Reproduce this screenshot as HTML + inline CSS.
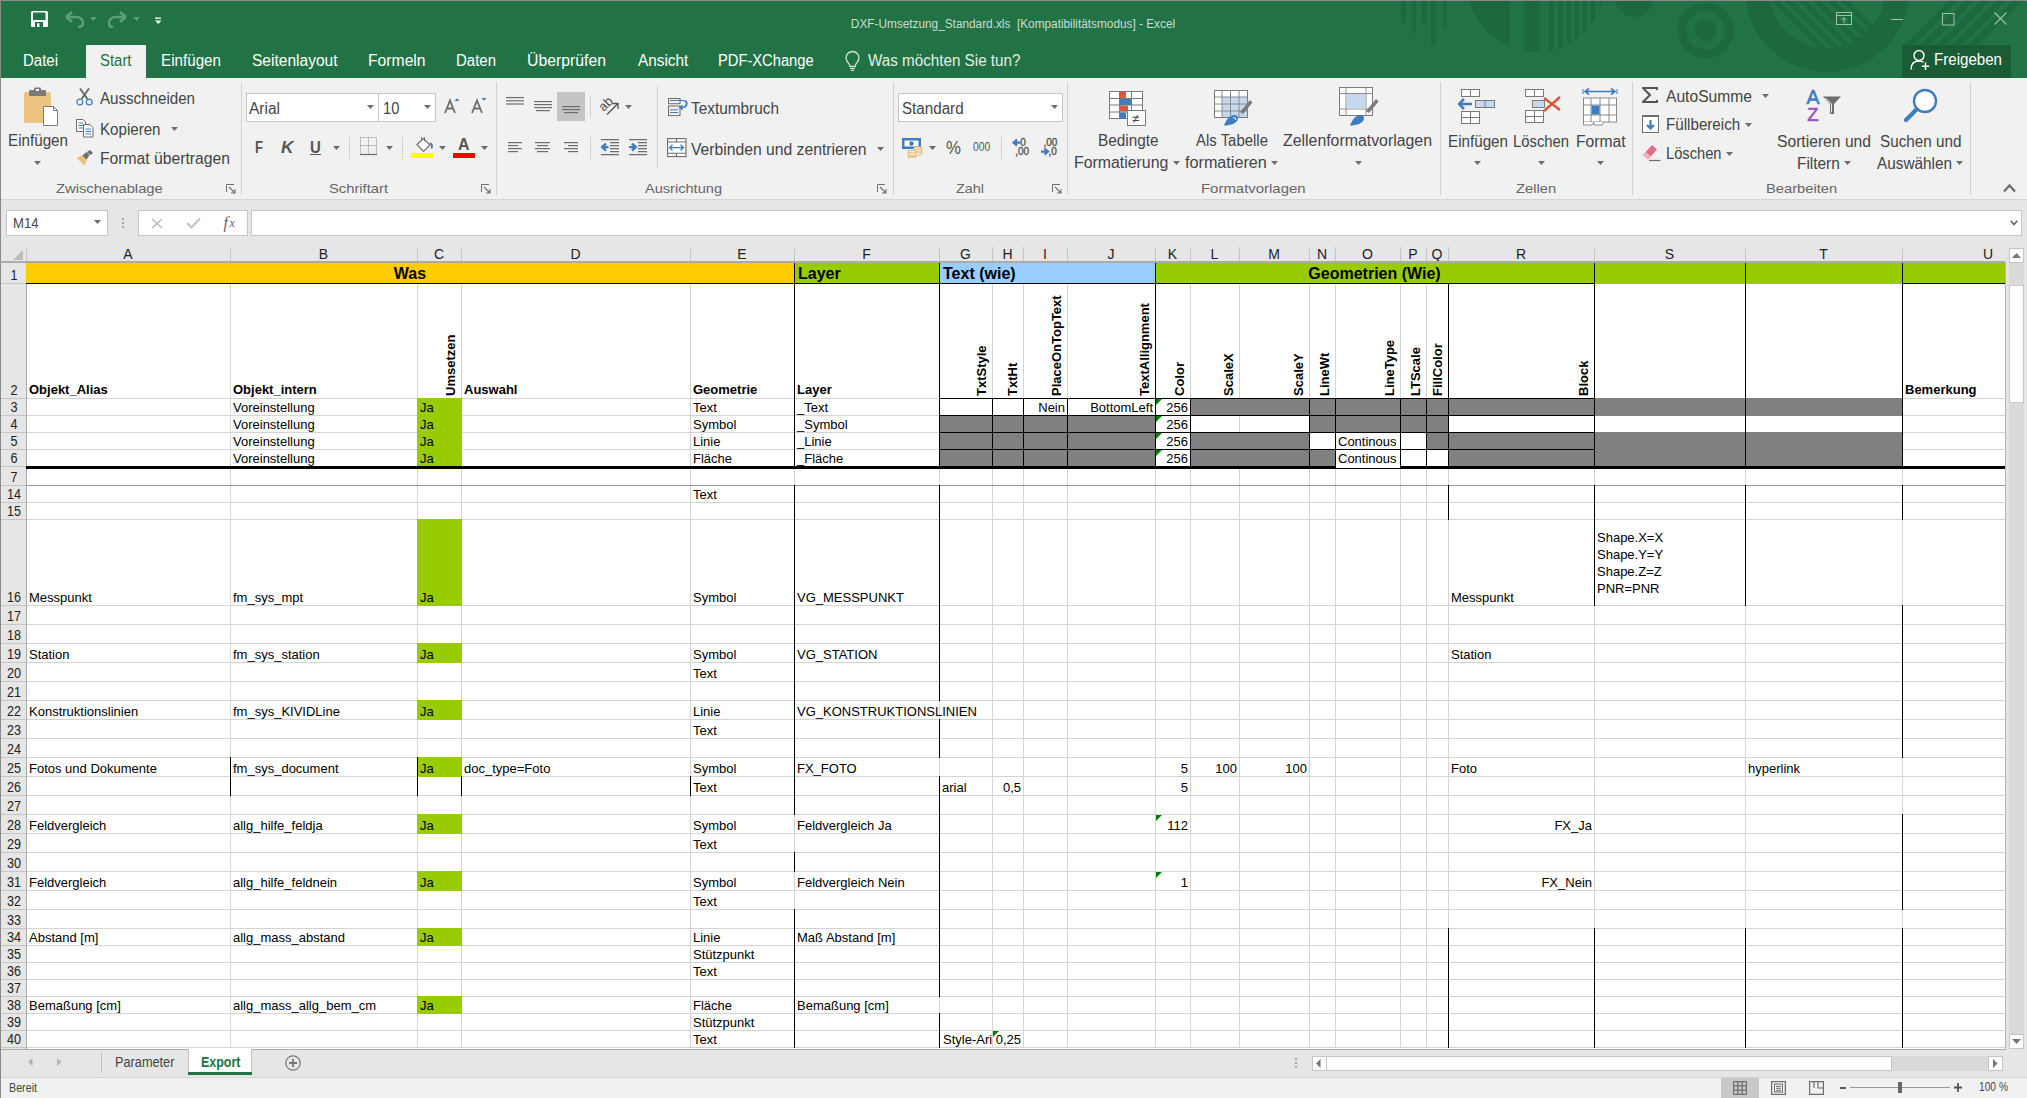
<!DOCTYPE html>
<html><head><meta charset="utf-8"><style>
html,body{margin:0;padding:0;width:2027px;height:1098px;overflow:hidden;background:#e6e6e6;font-family:"Liberation Sans",sans-serif}
div{position:absolute}
svg{position:absolute}
.t{white-space:nowrap;line-height:1}
</style></head><body>
<div style="left:0px;top:245px;width:2005px;height:804px;background:#ffffff;"></div>
<div style="left:0px;top:245px;width:2005px;height:17px;background:#e6e6e6;"></div>
<div style="left:0px;top:262px;width:26px;height:787px;background:#e6e6e6;"></div>
<div style="left:230px;top:262px;width:1px;height:785px;background:#d4d4d4;"></div>
<div style="left:417px;top:262px;width:1px;height:785px;background:#d4d4d4;"></div>
<div style="left:461px;top:262px;width:1px;height:785px;background:#d4d4d4;"></div>
<div style="left:690px;top:262px;width:1px;height:785px;background:#d4d4d4;"></div>
<div style="left:794px;top:262px;width:1px;height:785px;background:#d4d4d4;"></div>
<div style="left:939px;top:262px;width:1px;height:785px;background:#d4d4d4;"></div>
<div style="left:992px;top:262px;width:1px;height:785px;background:#d4d4d4;"></div>
<div style="left:1023px;top:262px;width:1px;height:785px;background:#d4d4d4;"></div>
<div style="left:1067px;top:262px;width:1px;height:785px;background:#d4d4d4;"></div>
<div style="left:1155px;top:262px;width:1px;height:785px;background:#d4d4d4;"></div>
<div style="left:1190px;top:262px;width:1px;height:785px;background:#d4d4d4;"></div>
<div style="left:1239px;top:262px;width:1px;height:785px;background:#d4d4d4;"></div>
<div style="left:1309px;top:262px;width:1px;height:785px;background:#d4d4d4;"></div>
<div style="left:1335px;top:262px;width:1px;height:785px;background:#d4d4d4;"></div>
<div style="left:1400px;top:262px;width:1px;height:785px;background:#d4d4d4;"></div>
<div style="left:1426px;top:262px;width:1px;height:785px;background:#d4d4d4;"></div>
<div style="left:1448px;top:262px;width:1px;height:785px;background:#d4d4d4;"></div>
<div style="left:1594px;top:262px;width:1px;height:785px;background:#d4d4d4;"></div>
<div style="left:1745px;top:262px;width:1px;height:785px;background:#d4d4d4;"></div>
<div style="left:1902px;top:262px;width:1px;height:785px;background:#d4d4d4;"></div>
<div style="left:26px;top:283px;width:1979px;height:1px;background:#d4d4d4;"></div>
<div style="left:26px;top:398px;width:1979px;height:1px;background:#d4d4d4;"></div>
<div style="left:26px;top:415px;width:1979px;height:1px;background:#d4d4d4;"></div>
<div style="left:26px;top:432px;width:1979px;height:1px;background:#d4d4d4;"></div>
<div style="left:26px;top:449px;width:1979px;height:1px;background:#d4d4d4;"></div>
<div style="left:26px;top:466px;width:1979px;height:1px;background:#d4d4d4;"></div>
<div style="left:26px;top:485px;width:1979px;height:1px;background:#d4d4d4;"></div>
<div style="left:26px;top:502px;width:1979px;height:1px;background:#d4d4d4;"></div>
<div style="left:26px;top:519px;width:1979px;height:1px;background:#d4d4d4;"></div>
<div style="left:26px;top:605px;width:1979px;height:1px;background:#d4d4d4;"></div>
<div style="left:26px;top:624px;width:1979px;height:1px;background:#d4d4d4;"></div>
<div style="left:26px;top:643px;width:1979px;height:1px;background:#d4d4d4;"></div>
<div style="left:26px;top:662px;width:1979px;height:1px;background:#d4d4d4;"></div>
<div style="left:26px;top:681px;width:1979px;height:1px;background:#d4d4d4;"></div>
<div style="left:26px;top:700px;width:1979px;height:1px;background:#d4d4d4;"></div>
<div style="left:26px;top:719px;width:1979px;height:1px;background:#d4d4d4;"></div>
<div style="left:26px;top:738px;width:1979px;height:1px;background:#d4d4d4;"></div>
<div style="left:26px;top:757px;width:1979px;height:1px;background:#d4d4d4;"></div>
<div style="left:26px;top:776px;width:1979px;height:1px;background:#d4d4d4;"></div>
<div style="left:26px;top:795px;width:1979px;height:1px;background:#d4d4d4;"></div>
<div style="left:26px;top:814px;width:1979px;height:1px;background:#d4d4d4;"></div>
<div style="left:26px;top:833px;width:1979px;height:1px;background:#d4d4d4;"></div>
<div style="left:26px;top:852px;width:1979px;height:1px;background:#d4d4d4;"></div>
<div style="left:26px;top:871px;width:1979px;height:1px;background:#d4d4d4;"></div>
<div style="left:26px;top:890px;width:1979px;height:1px;background:#d4d4d4;"></div>
<div style="left:26px;top:909px;width:1979px;height:1px;background:#d4d4d4;"></div>
<div style="left:26px;top:928px;width:1979px;height:1px;background:#d4d4d4;"></div>
<div style="left:26px;top:945px;width:1979px;height:1px;background:#d4d4d4;"></div>
<div style="left:26px;top:962px;width:1979px;height:1px;background:#d4d4d4;"></div>
<div style="left:26px;top:979px;width:1979px;height:1px;background:#d4d4d4;"></div>
<div style="left:26px;top:996px;width:1979px;height:1px;background:#d4d4d4;"></div>
<div style="left:26px;top:1013px;width:1979px;height:1px;background:#d4d4d4;"></div>
<div style="left:26px;top:1030px;width:1979px;height:1px;background:#d4d4d4;"></div>
<div style="left:26px;top:1047px;width:1979px;height:1px;background:#d4d4d4;"></div>
<div class="t" style="left:-172.0px;width:600px;text-align:center;top:247.25px;font-size:14px;color:#222;">A</div>
<div class="t" style="left:23.5px;width:600px;text-align:center;top:247.25px;font-size:14px;color:#222;">B</div>
<div class="t" style="left:139.0px;width:600px;text-align:center;top:247.25px;font-size:14px;color:#222;">C</div>
<div class="t" style="left:275.5px;width:600px;text-align:center;top:247.25px;font-size:14px;color:#222;">D</div>
<div class="t" style="left:442.0px;width:600px;text-align:center;top:247.25px;font-size:14px;color:#222;">E</div>
<div class="t" style="left:566.5px;width:600px;text-align:center;top:247.25px;font-size:14px;color:#222;">F</div>
<div class="t" style="left:665.5px;width:600px;text-align:center;top:247.25px;font-size:14px;color:#222;">G</div>
<div class="t" style="left:707.5px;width:600px;text-align:center;top:247.25px;font-size:14px;color:#222;">H</div>
<div class="t" style="left:745.0px;width:600px;text-align:center;top:247.25px;font-size:14px;color:#222;">I</div>
<div class="t" style="left:811.0px;width:600px;text-align:center;top:247.25px;font-size:14px;color:#222;">J</div>
<div class="t" style="left:872.5px;width:600px;text-align:center;top:247.25px;font-size:14px;color:#222;">K</div>
<div class="t" style="left:914.5px;width:600px;text-align:center;top:247.25px;font-size:14px;color:#222;">L</div>
<div class="t" style="left:974.0px;width:600px;text-align:center;top:247.25px;font-size:14px;color:#222;">M</div>
<div class="t" style="left:1022.0px;width:600px;text-align:center;top:247.25px;font-size:14px;color:#222;">N</div>
<div class="t" style="left:1067.5px;width:600px;text-align:center;top:247.25px;font-size:14px;color:#222;">O</div>
<div class="t" style="left:1113.0px;width:600px;text-align:center;top:247.25px;font-size:14px;color:#222;">P</div>
<div class="t" style="left:1137.0px;width:600px;text-align:center;top:247.25px;font-size:14px;color:#222;">Q</div>
<div class="t" style="left:1221.0px;width:600px;text-align:center;top:247.25px;font-size:14px;color:#222;">R</div>
<div class="t" style="left:1369.5px;width:600px;text-align:center;top:247.25px;font-size:14px;color:#222;">S</div>
<div class="t" style="left:1523.5px;width:600px;text-align:center;top:247.25px;font-size:14px;color:#222;">T</div>
<div class="t" style="left:1688px;width:600px;text-align:center;top:247.25px;font-size:14px;color:#222;">U</div>
<div style="left:230px;top:247px;width:1px;height:15px;background:#c6c6c6;"></div>
<div style="left:417px;top:247px;width:1px;height:15px;background:#c6c6c6;"></div>
<div style="left:461px;top:247px;width:1px;height:15px;background:#c6c6c6;"></div>
<div style="left:690px;top:247px;width:1px;height:15px;background:#c6c6c6;"></div>
<div style="left:794px;top:247px;width:1px;height:15px;background:#c6c6c6;"></div>
<div style="left:939px;top:247px;width:1px;height:15px;background:#c6c6c6;"></div>
<div style="left:992px;top:247px;width:1px;height:15px;background:#c6c6c6;"></div>
<div style="left:1023px;top:247px;width:1px;height:15px;background:#c6c6c6;"></div>
<div style="left:1067px;top:247px;width:1px;height:15px;background:#c6c6c6;"></div>
<div style="left:1155px;top:247px;width:1px;height:15px;background:#c6c6c6;"></div>
<div style="left:1190px;top:247px;width:1px;height:15px;background:#c6c6c6;"></div>
<div style="left:1239px;top:247px;width:1px;height:15px;background:#c6c6c6;"></div>
<div style="left:1309px;top:247px;width:1px;height:15px;background:#c6c6c6;"></div>
<div style="left:1335px;top:247px;width:1px;height:15px;background:#c6c6c6;"></div>
<div style="left:1400px;top:247px;width:1px;height:15px;background:#c6c6c6;"></div>
<div style="left:1426px;top:247px;width:1px;height:15px;background:#c6c6c6;"></div>
<div style="left:1448px;top:247px;width:1px;height:15px;background:#c6c6c6;"></div>
<div style="left:1594px;top:247px;width:1px;height:15px;background:#c6c6c6;"></div>
<div style="left:1745px;top:247px;width:1px;height:15px;background:#c6c6c6;"></div>
<div style="left:1902px;top:247px;width:1px;height:15px;background:#c6c6c6;"></div>
<div style="left:26px;top:247px;width:1px;height:15px;background:#c6c6c6;"></div>
<svg style="position:absolute;left:13px;top:250px" width="10" height="10"><path d="M10 0 L10 10 L0 10 Z" fill="#bdbdbd"/></svg>
<div style="left:0px;top:261px;width:2005px;height:1px;background:#ababab;"></div>
<div style="left:26px;top:262px;width:1px;height:787px;background:#ababab;"></div>
<div class="t" style="left:-286.5px;width:600px;text-align:center;top:268.25px;font-size:14px;color:#222;transform:scaleX(0.9);transform-origin:50% 0;">1</div>
<div style="left:0px;top:283px;width:26px;height:1px;background:#c6c6c6;"></div>
<div class="t" style="left:-286.5px;width:600px;text-align:center;top:383.25px;font-size:14px;color:#222;transform:scaleX(0.9);transform-origin:50% 0;">2</div>
<div style="left:0px;top:398px;width:26px;height:1px;background:#c6c6c6;"></div>
<div class="t" style="left:-286.5px;width:600px;text-align:center;top:400.25px;font-size:14px;color:#222;transform:scaleX(0.9);transform-origin:50% 0;">3</div>
<div style="left:0px;top:415px;width:26px;height:1px;background:#c6c6c6;"></div>
<div class="t" style="left:-286.5px;width:600px;text-align:center;top:417.25px;font-size:14px;color:#222;transform:scaleX(0.9);transform-origin:50% 0;">4</div>
<div style="left:0px;top:432px;width:26px;height:1px;background:#c6c6c6;"></div>
<div class="t" style="left:-286.5px;width:600px;text-align:center;top:434.25px;font-size:14px;color:#222;transform:scaleX(0.9);transform-origin:50% 0;">5</div>
<div style="left:0px;top:449px;width:26px;height:1px;background:#c6c6c6;"></div>
<div class="t" style="left:-286.5px;width:600px;text-align:center;top:451.25px;font-size:14px;color:#222;transform:scaleX(0.9);transform-origin:50% 0;">6</div>
<div style="left:0px;top:466px;width:26px;height:1px;background:#c6c6c6;"></div>
<div class="t" style="left:-286.5px;width:600px;text-align:center;top:470.25px;font-size:14px;color:#222;transform:scaleX(0.9);transform-origin:50% 0;">7</div>
<div style="left:0px;top:485px;width:26px;height:1px;background:#c6c6c6;"></div>
<div class="t" style="left:-286.5px;width:600px;text-align:center;top:487.25px;font-size:14px;color:#222;transform:scaleX(0.9);transform-origin:50% 0;">14</div>
<div style="left:0px;top:502px;width:26px;height:1px;background:#c6c6c6;"></div>
<div class="t" style="left:-286.5px;width:600px;text-align:center;top:504.25px;font-size:14px;color:#222;transform:scaleX(0.9);transform-origin:50% 0;">15</div>
<div style="left:0px;top:519px;width:26px;height:1px;background:#c6c6c6;"></div>
<div class="t" style="left:-286.5px;width:600px;text-align:center;top:590.25px;font-size:14px;color:#222;transform:scaleX(0.9);transform-origin:50% 0;">16</div>
<div style="left:0px;top:605px;width:26px;height:1px;background:#c6c6c6;"></div>
<div class="t" style="left:-286.5px;width:600px;text-align:center;top:609.25px;font-size:14px;color:#222;transform:scaleX(0.9);transform-origin:50% 0;">17</div>
<div style="left:0px;top:624px;width:26px;height:1px;background:#c6c6c6;"></div>
<div class="t" style="left:-286.5px;width:600px;text-align:center;top:628.25px;font-size:14px;color:#222;transform:scaleX(0.9);transform-origin:50% 0;">18</div>
<div style="left:0px;top:643px;width:26px;height:1px;background:#c6c6c6;"></div>
<div class="t" style="left:-286.5px;width:600px;text-align:center;top:647.25px;font-size:14px;color:#222;transform:scaleX(0.9);transform-origin:50% 0;">19</div>
<div style="left:0px;top:662px;width:26px;height:1px;background:#c6c6c6;"></div>
<div class="t" style="left:-286.5px;width:600px;text-align:center;top:666.25px;font-size:14px;color:#222;transform:scaleX(0.9);transform-origin:50% 0;">20</div>
<div style="left:0px;top:681px;width:26px;height:1px;background:#c6c6c6;"></div>
<div class="t" style="left:-286.5px;width:600px;text-align:center;top:685.25px;font-size:14px;color:#222;transform:scaleX(0.9);transform-origin:50% 0;">21</div>
<div style="left:0px;top:700px;width:26px;height:1px;background:#c6c6c6;"></div>
<div class="t" style="left:-286.5px;width:600px;text-align:center;top:704.25px;font-size:14px;color:#222;transform:scaleX(0.9);transform-origin:50% 0;">22</div>
<div style="left:0px;top:719px;width:26px;height:1px;background:#c6c6c6;"></div>
<div class="t" style="left:-286.5px;width:600px;text-align:center;top:723.25px;font-size:14px;color:#222;transform:scaleX(0.9);transform-origin:50% 0;">23</div>
<div style="left:0px;top:738px;width:26px;height:1px;background:#c6c6c6;"></div>
<div class="t" style="left:-286.5px;width:600px;text-align:center;top:742.25px;font-size:14px;color:#222;transform:scaleX(0.9);transform-origin:50% 0;">24</div>
<div style="left:0px;top:757px;width:26px;height:1px;background:#c6c6c6;"></div>
<div class="t" style="left:-286.5px;width:600px;text-align:center;top:761.25px;font-size:14px;color:#222;transform:scaleX(0.9);transform-origin:50% 0;">25</div>
<div style="left:0px;top:776px;width:26px;height:1px;background:#c6c6c6;"></div>
<div class="t" style="left:-286.5px;width:600px;text-align:center;top:780.25px;font-size:14px;color:#222;transform:scaleX(0.9);transform-origin:50% 0;">26</div>
<div style="left:0px;top:795px;width:26px;height:1px;background:#c6c6c6;"></div>
<div class="t" style="left:-286.5px;width:600px;text-align:center;top:799.25px;font-size:14px;color:#222;transform:scaleX(0.9);transform-origin:50% 0;">27</div>
<div style="left:0px;top:814px;width:26px;height:1px;background:#c6c6c6;"></div>
<div class="t" style="left:-286.5px;width:600px;text-align:center;top:818.25px;font-size:14px;color:#222;transform:scaleX(0.9);transform-origin:50% 0;">28</div>
<div style="left:0px;top:833px;width:26px;height:1px;background:#c6c6c6;"></div>
<div class="t" style="left:-286.5px;width:600px;text-align:center;top:837.25px;font-size:14px;color:#222;transform:scaleX(0.9);transform-origin:50% 0;">29</div>
<div style="left:0px;top:852px;width:26px;height:1px;background:#c6c6c6;"></div>
<div class="t" style="left:-286.5px;width:600px;text-align:center;top:856.25px;font-size:14px;color:#222;transform:scaleX(0.9);transform-origin:50% 0;">30</div>
<div style="left:0px;top:871px;width:26px;height:1px;background:#c6c6c6;"></div>
<div class="t" style="left:-286.5px;width:600px;text-align:center;top:875.25px;font-size:14px;color:#222;transform:scaleX(0.9);transform-origin:50% 0;">31</div>
<div style="left:0px;top:890px;width:26px;height:1px;background:#c6c6c6;"></div>
<div class="t" style="left:-286.5px;width:600px;text-align:center;top:894.25px;font-size:14px;color:#222;transform:scaleX(0.9);transform-origin:50% 0;">32</div>
<div style="left:0px;top:909px;width:26px;height:1px;background:#c6c6c6;"></div>
<div class="t" style="left:-286.5px;width:600px;text-align:center;top:913.25px;font-size:14px;color:#222;transform:scaleX(0.9);transform-origin:50% 0;">33</div>
<div style="left:0px;top:928px;width:26px;height:1px;background:#c6c6c6;"></div>
<div class="t" style="left:-286.5px;width:600px;text-align:center;top:930.25px;font-size:14px;color:#222;transform:scaleX(0.9);transform-origin:50% 0;">34</div>
<div style="left:0px;top:945px;width:26px;height:1px;background:#c6c6c6;"></div>
<div class="t" style="left:-286.5px;width:600px;text-align:center;top:947.25px;font-size:14px;color:#222;transform:scaleX(0.9);transform-origin:50% 0;">35</div>
<div style="left:0px;top:962px;width:26px;height:1px;background:#c6c6c6;"></div>
<div class="t" style="left:-286.5px;width:600px;text-align:center;top:964.25px;font-size:14px;color:#222;transform:scaleX(0.9);transform-origin:50% 0;">36</div>
<div style="left:0px;top:979px;width:26px;height:1px;background:#c6c6c6;"></div>
<div class="t" style="left:-286.5px;width:600px;text-align:center;top:981.25px;font-size:14px;color:#222;transform:scaleX(0.9);transform-origin:50% 0;">37</div>
<div style="left:0px;top:996px;width:26px;height:1px;background:#c6c6c6;"></div>
<div class="t" style="left:-286.5px;width:600px;text-align:center;top:998.25px;font-size:14px;color:#222;transform:scaleX(0.9);transform-origin:50% 0;">38</div>
<div style="left:0px;top:1013px;width:26px;height:1px;background:#c6c6c6;"></div>
<div class="t" style="left:-286.5px;width:600px;text-align:center;top:1015.25px;font-size:14px;color:#222;transform:scaleX(0.9);transform-origin:50% 0;">39</div>
<div style="left:0px;top:1030px;width:26px;height:1px;background:#c6c6c6;"></div>
<div class="t" style="left:-286.5px;width:600px;text-align:center;top:1032.25px;font-size:14px;color:#222;transform:scaleX(0.9);transform-origin:50% 0;">40</div>
<div style="left:0px;top:1047px;width:26px;height:1px;background:#c6c6c6;"></div>
<div style="left:26px;top:262px;width:769px;height:22px;background:#ffcc00;"></div>
<div style="left:794px;top:262px;width:146px;height:22px;background:#99cc00;"></div>
<div style="left:939px;top:262px;width:217px;height:22px;background:#99ccff;"></div>
<div style="left:1155px;top:262px;width:851px;height:22px;background:#99cc00;"></div>
<div style="left:417px;top:398px;width:45px;height:18px;background:#99cc00;"></div>
<div style="left:417px;top:415px;width:45px;height:18px;background:#99cc00;"></div>
<div style="left:417px;top:432px;width:45px;height:18px;background:#99cc00;"></div>
<div style="left:417px;top:449px;width:45px;height:18px;background:#99cc00;"></div>
<div style="left:417px;top:519px;width:45px;height:87px;background:#99cc00;"></div>
<div style="left:417px;top:643px;width:45px;height:20px;background:#99cc00;"></div>
<div style="left:417px;top:700px;width:45px;height:20px;background:#99cc00;"></div>
<div style="left:417px;top:757px;width:45px;height:20px;background:#99cc00;"></div>
<div style="left:417px;top:814px;width:45px;height:20px;background:#99cc00;"></div>
<div style="left:417px;top:871px;width:45px;height:20px;background:#99cc00;"></div>
<div style="left:417px;top:928px;width:45px;height:18px;background:#99cc00;"></div>
<div style="left:417px;top:996px;width:45px;height:18px;background:#99cc00;"></div>
<div style="left:1190px;top:398px;width:50px;height:18px;background:#808080;"></div>
<div style="left:1239px;top:398px;width:71px;height:18px;background:#808080;"></div>
<div style="left:1309px;top:398px;width:27px;height:18px;background:#808080;"></div>
<div style="left:1335px;top:398px;width:66px;height:18px;background:#808080;"></div>
<div style="left:1400px;top:398px;width:27px;height:18px;background:#808080;"></div>
<div style="left:1426px;top:398px;width:23px;height:18px;background:#808080;"></div>
<div style="left:1448px;top:398px;width:147px;height:18px;background:#808080;"></div>
<div style="left:1594px;top:398px;width:152px;height:18px;background:#808080;"></div>
<div style="left:1745px;top:398px;width:158px;height:18px;background:#808080;"></div>
<div style="left:939px;top:415px;width:54px;height:18px;background:#808080;"></div>
<div style="left:992px;top:415px;width:32px;height:18px;background:#808080;"></div>
<div style="left:1023px;top:415px;width:45px;height:18px;background:#808080;"></div>
<div style="left:1067px;top:415px;width:89px;height:18px;background:#808080;"></div>
<div style="left:1309px;top:415px;width:27px;height:18px;background:#808080;"></div>
<div style="left:1335px;top:415px;width:66px;height:18px;background:#808080;"></div>
<div style="left:1400px;top:415px;width:27px;height:18px;background:#808080;"></div>
<div style="left:1426px;top:415px;width:23px;height:18px;background:#808080;"></div>
<div style="left:939px;top:432px;width:54px;height:18px;background:#808080;"></div>
<div style="left:992px;top:432px;width:32px;height:18px;background:#808080;"></div>
<div style="left:1023px;top:432px;width:45px;height:18px;background:#808080;"></div>
<div style="left:1067px;top:432px;width:89px;height:18px;background:#808080;"></div>
<div style="left:1190px;top:432px;width:50px;height:18px;background:#808080;"></div>
<div style="left:1239px;top:432px;width:71px;height:18px;background:#808080;"></div>
<div style="left:1426px;top:432px;width:23px;height:18px;background:#808080;"></div>
<div style="left:1448px;top:432px;width:147px;height:18px;background:#808080;"></div>
<div style="left:1594px;top:432px;width:152px;height:18px;background:#808080;"></div>
<div style="left:1745px;top:432px;width:158px;height:18px;background:#808080;"></div>
<div style="left:939px;top:449px;width:54px;height:18px;background:#808080;"></div>
<div style="left:992px;top:449px;width:32px;height:18px;background:#808080;"></div>
<div style="left:1023px;top:449px;width:45px;height:18px;background:#808080;"></div>
<div style="left:1067px;top:449px;width:89px;height:18px;background:#808080;"></div>
<div style="left:1190px;top:449px;width:50px;height:18px;background:#808080;"></div>
<div style="left:1239px;top:449px;width:71px;height:18px;background:#808080;"></div>
<div style="left:1309px;top:449px;width:27px;height:18px;background:#808080;"></div>
<div style="left:1448px;top:449px;width:147px;height:18px;background:#808080;"></div>
<div style="left:1594px;top:449px;width:152px;height:18px;background:#808080;"></div>
<div style="left:1745px;top:449px;width:158px;height:18px;background:#808080;"></div>
<div style="left:940px;top:399px;width:52px;height:16px;background:#fff;"></div>
<div style="left:993px;top:399px;width:30px;height:16px;background:#fff;"></div>
<div style="left:1024px;top:399px;width:43px;height:16px;background:#fff;"></div>
<div style="left:1068px;top:399px;width:87px;height:16px;background:#fff;"></div>
<div style="left:1156px;top:399px;width:34px;height:16px;background:#fff;"></div>
<div style="left:1156px;top:416px;width:34px;height:16px;background:#fff;"></div>
<div style="left:1191px;top:416px;width:48px;height:16px;background:#fff;"></div>
<div style="left:1240px;top:416px;width:69px;height:16px;background:#fff;"></div>
<div style="left:1449px;top:416px;width:145px;height:16px;background:#fff;"></div>
<div style="left:1595px;top:416px;width:150px;height:16px;background:#fff;"></div>
<div style="left:1746px;top:416px;width:156px;height:16px;background:#fff;"></div>
<div style="left:1156px;top:433px;width:34px;height:16px;background:#fff;"></div>
<div style="left:1310px;top:433px;width:25px;height:16px;background:#fff;"></div>
<div style="left:1336px;top:433px;width:64px;height:16px;background:#fff;"></div>
<div style="left:1401px;top:433px;width:25px;height:16px;background:#fff;"></div>
<div style="left:1156px;top:450px;width:34px;height:16px;background:#fff;"></div>
<div style="left:1336px;top:450px;width:64px;height:16px;background:#fff;"></div>
<div style="left:1401px;top:450px;width:25px;height:16px;background:#fff;"></div>
<div style="left:1427px;top:450px;width:21px;height:16px;background:#fff;"></div>
<div style="left:1594px;top:449px;width:308px;height:1px;background:#808080;"></div>
<div style="left:26px;top:283px;width:1569px;height:1px;background:#000;"></div>
<div style="left:1902px;top:283px;width:104px;height:1px;background:#000;"></div>
<div style="left:794px;top:262px;width:1px;height:205px;background:#000;"></div>
<div style="left:939px;top:262px;width:1px;height:205px;background:#000;"></div>
<div style="left:1155px;top:262px;width:1px;height:205px;background:#000;"></div>
<div style="left:1594px;top:262px;width:1px;height:205px;background:#000;"></div>
<div style="left:1745px;top:262px;width:1px;height:205px;background:#000;"></div>
<div style="left:1902px;top:262px;width:1px;height:205px;background:#000;"></div>
<div style="left:1448px;top:283px;width:1px;height:184px;background:#000;"></div>
<div style="left:939px;top:398px;width:656px;height:1px;background:#000;"></div>
<div style="left:939px;top:415px;width:656px;height:1px;background:#000;"></div>
<div style="left:939px;top:432px;width:656px;height:1px;background:#000;"></div>
<div style="left:939px;top:449px;width:656px;height:1px;background:#000;"></div>
<div style="left:992px;top:398px;width:1px;height:69px;background:#000;"></div>
<div style="left:1023px;top:398px;width:1px;height:69px;background:#000;"></div>
<div style="left:1067px;top:398px;width:1px;height:69px;background:#000;"></div>
<div style="left:1190px;top:398px;width:1px;height:69px;background:#000;"></div>
<div style="left:1309px;top:398px;width:1px;height:69px;background:#000;"></div>
<div style="left:1335px;top:398px;width:1px;height:69px;background:#000;"></div>
<div style="left:1400px;top:398px;width:1px;height:69px;background:#000;"></div>
<div style="left:1426px;top:398px;width:1px;height:69px;background:#000;"></div>
<div style="left:26px;top:466px;width:1979px;height:3px;background:#000;"></div>
<div style="left:26px;top:485px;width:1979px;height:1px;background:#9a9a9a;"></div>
<div style="left:794px;top:485px;width:1px;height:330px;background:#000;"></div>
<div style="left:794px;top:852px;width:1px;height:20px;background:#000;"></div>
<div style="left:794px;top:909px;width:1px;height:139px;background:#000;"></div>
<div style="left:939px;top:485px;width:1px;height:216px;background:#000;"></div>
<div style="left:939px;top:719px;width:1px;height:39px;background:#000;"></div>
<div style="left:939px;top:776px;width:1px;height:221px;background:#000;"></div>
<div style="left:939px;top:1013px;width:1px;height:35px;background:#000;"></div>
<div style="left:230px;top:757px;width:1px;height:39px;background:#000;"></div>
<div style="left:417px;top:757px;width:1px;height:39px;background:#000;"></div>
<div style="left:461px;top:776px;width:1px;height:20px;background:#000;"></div>
<div style="left:690px;top:776px;width:1px;height:20px;background:#000;"></div>
<div style="left:1448px;top:485px;width:1px;height:35px;background:#000;"></div>
<div style="left:1448px;top:928px;width:1px;height:120px;background:#000;"></div>
<div style="left:1594px;top:485px;width:1px;height:121px;background:#000;"></div>
<div style="left:1594px;top:928px;width:1px;height:120px;background:#000;"></div>
<div style="left:1745px;top:485px;width:1px;height:121px;background:#000;"></div>
<div style="left:1745px;top:928px;width:1px;height:120px;background:#000;"></div>
<div style="left:1902px;top:485px;width:1px;height:35px;background:#000;"></div>
<div style="left:1902px;top:605px;width:1px;height:153px;background:#000;"></div>
<div style="left:1902px;top:814px;width:1px;height:96px;background:#000;"></div>
<div style="left:1902px;top:928px;width:1px;height:120px;background:#000;"></div>
<svg style="position:absolute;left:1156px;top:399px" width="6" height="6"><path d="M0 0 L6 0 L0 6 Z" fill="#008000"/></svg>
<svg style="position:absolute;left:1156px;top:416px" width="6" height="6"><path d="M0 0 L6 0 L0 6 Z" fill="#008000"/></svg>
<svg style="position:absolute;left:1156px;top:433px" width="6" height="6"><path d="M0 0 L6 0 L0 6 Z" fill="#008000"/></svg>
<svg style="position:absolute;left:1156px;top:450px" width="6" height="6"><path d="M0 0 L6 0 L0 6 Z" fill="#008000"/></svg>
<svg style="position:absolute;left:1156px;top:815px" width="6" height="6"><path d="M0 0 L6 0 L0 6 Z" fill="#008000"/></svg>
<svg style="position:absolute;left:1156px;top:872px" width="6" height="6"><path d="M0 0 L6 0 L0 6 Z" fill="#008000"/></svg>
<svg style="position:absolute;left:993px;top:1031px" width="6" height="6"><path d="M0 0 L6 0 L0 6 Z" fill="#008000"/></svg>
<div class="t" style="left:110px;width:600px;text-align:center;top:265.86px;font-size:16px;color:#000;font-weight:bold;">Was</div>
<div class="t" style="left:798px;top:265.86px;font-size:16px;color:#000;font-weight:bold;">Layer</div>
<div class="t" style="left:943px;top:265.86px;font-size:16px;color:#000;font-weight:bold;">Text (wie)</div>
<div class="t" style="left:1074.5px;width:600px;text-align:center;top:265.86px;font-size:16px;color:#000;font-weight:bold;">Geometrien (Wie)</div>
<div class="t" style="left:29px;top:383.10px;font-size:13px;color:#000;font-weight:bold;">Objekt_Alias</div>
<div class="t" style="left:233px;top:383.10px;font-size:13px;color:#000;font-weight:bold;">Objekt_intern</div>
<div class="t" style="left:464px;top:383.10px;font-size:13px;color:#000;font-weight:bold;">Auswahl</div>
<div class="t" style="left:693px;top:383.10px;font-size:13px;color:#000;font-weight:bold;">Geometrie</div>
<div class="t" style="left:797px;top:383.10px;font-size:13px;color:#000;font-weight:bold;">Layer</div>
<div class="t" style="left:1905px;top:383.10px;font-size:13px;color:#000;font-weight:bold;">Bemerkung</div>
<div class="t" style="left:455px;top:396px;font-size:13px;color:#000;font-weight:bold;transform-origin:0 0;transform:rotate(-90deg) translate(0,-11.00px)">Umsetzen</div>
<div class="t" style="left:986px;top:396px;font-size:13px;color:#000;font-weight:bold;transform-origin:0 0;transform:rotate(-90deg) translate(0,-11.00px)">TxtStyle</div>
<div class="t" style="left:1017px;top:396px;font-size:13px;color:#000;font-weight:bold;transform-origin:0 0;transform:rotate(-90deg) translate(0,-11.00px)">TxtHt</div>
<div class="t" style="left:1061px;top:396px;font-size:13px;color:#000;font-weight:bold;transform-origin:0 0;transform:rotate(-90deg) translate(0,-11.00px)">PlaceOnTopText</div>
<div class="t" style="left:1149px;top:396px;font-size:13px;color:#000;font-weight:bold;transform-origin:0 0;transform:rotate(-90deg) translate(0,-11.00px)">TextAllignment</div>
<div class="t" style="left:1184px;top:396px;font-size:13px;color:#000;font-weight:bold;transform-origin:0 0;transform:rotate(-90deg) translate(0,-11.00px)">Color</div>
<div class="t" style="left:1233px;top:396px;font-size:13px;color:#000;font-weight:bold;transform-origin:0 0;transform:rotate(-90deg) translate(0,-11.00px)">ScaleX</div>
<div class="t" style="left:1303px;top:396px;font-size:13px;color:#000;font-weight:bold;transform-origin:0 0;transform:rotate(-90deg) translate(0,-11.00px)">ScaleY</div>
<div class="t" style="left:1329px;top:396px;font-size:13px;color:#000;font-weight:bold;transform-origin:0 0;transform:rotate(-90deg) translate(0,-11.00px)">LineWt</div>
<div class="t" style="left:1394px;top:396px;font-size:13px;color:#000;font-weight:bold;transform-origin:0 0;transform:rotate(-90deg) translate(0,-11.00px)">LineType</div>
<div class="t" style="left:1420px;top:396px;font-size:13px;color:#000;font-weight:bold;transform-origin:0 0;transform:rotate(-90deg) translate(0,-11.00px)">LTScale</div>
<div class="t" style="left:1442px;top:396px;font-size:13px;color:#000;font-weight:bold;transform-origin:0 0;transform:rotate(-90deg) translate(0,-11.00px)">FillColor</div>
<div class="t" style="left:1588px;top:396px;font-size:13px;color:#000;font-weight:bold;transform-origin:0 0;transform:rotate(-90deg) translate(0,-11.00px)">Block</div>
<div class="t" style="left:233px;top:401.10px;font-size:13px;color:#000;">Voreinstellung</div>
<div class="t" style="left:420px;top:401.10px;font-size:13px;color:#000;">Ja</div>
<div class="t" style="left:693px;top:401.10px;font-size:13px;color:#000;">Text</div>
<div class="t" style="left:797px;top:401.10px;font-size:13px;color:#000;">_Text</div>
<div class="t" style="right:839px;top:401.10px;font-size:13px;color:#000;">256</div>
<div class="t" style="left:233px;top:418.10px;font-size:13px;color:#000;">Voreinstellung</div>
<div class="t" style="left:420px;top:418.10px;font-size:13px;color:#000;">Ja</div>
<div class="t" style="left:693px;top:418.10px;font-size:13px;color:#000;">Symbol</div>
<div class="t" style="left:797px;top:418.10px;font-size:13px;color:#000;">_Symbol</div>
<div class="t" style="right:839px;top:418.10px;font-size:13px;color:#000;">256</div>
<div class="t" style="left:233px;top:435.10px;font-size:13px;color:#000;">Voreinstellung</div>
<div class="t" style="left:420px;top:435.10px;font-size:13px;color:#000;">Ja</div>
<div class="t" style="left:693px;top:435.10px;font-size:13px;color:#000;">Linie</div>
<div class="t" style="left:797px;top:435.10px;font-size:13px;color:#000;">_Linie</div>
<div class="t" style="right:839px;top:435.10px;font-size:13px;color:#000;">256</div>
<div class="t" style="left:233px;top:452.10px;font-size:13px;color:#000;">Voreinstellung</div>
<div class="t" style="left:420px;top:452.10px;font-size:13px;color:#000;">Ja</div>
<div class="t" style="left:693px;top:452.10px;font-size:13px;color:#000;">Fläche</div>
<div class="t" style="left:797px;top:452.10px;font-size:13px;color:#000;">_Fläche</div>
<div class="t" style="right:839px;top:452.10px;font-size:13px;color:#000;">256</div>
<div class="t" style="right:962px;top:401.10px;font-size:13px;color:#000;">Nein</div>
<div class="t" style="right:874px;top:401.10px;font-size:13px;color:#000;">BottomLeft</div>
<div class="t" style="left:1338px;top:435.10px;font-size:13px;color:#000;">Continous</div>
<div class="t" style="left:1338px;top:452.10px;font-size:13px;color:#000;">Continous</div>
<div class="t" style="left:693px;top:488.10px;font-size:13px;color:#000;">Text</div>
<div class="t" style="left:29px;top:591.10px;font-size:13px;color:#000;">Messpunkt</div>
<div class="t" style="left:233px;top:591.10px;font-size:13px;color:#000;">fm_sys_mpt</div>
<div class="t" style="left:420px;top:591.10px;font-size:13px;color:#000;">Ja</div>
<div class="t" style="left:693px;top:591.10px;font-size:13px;color:#000;">Symbol</div>
<div class="t" style="left:797px;top:591.10px;font-size:13px;color:#000;">VG_MESSPUNKT</div>
<div class="t" style="left:1451px;top:591.10px;font-size:13px;color:#000;">Messpunkt</div>
<div class="t" style="left:29px;top:648.10px;font-size:13px;color:#000;">Station</div>
<div class="t" style="left:233px;top:648.10px;font-size:13px;color:#000;">fm_sys_station</div>
<div class="t" style="left:420px;top:648.10px;font-size:13px;color:#000;">Ja</div>
<div class="t" style="left:693px;top:648.10px;font-size:13px;color:#000;">Symbol</div>
<div class="t" style="left:797px;top:648.10px;font-size:13px;color:#000;">VG_STATION</div>
<div class="t" style="left:1451px;top:648.10px;font-size:13px;color:#000;">Station</div>
<div class="t" style="left:29px;top:705.10px;font-size:13px;color:#000;">Konstruktionslinien</div>
<div class="t" style="left:233px;top:705.10px;font-size:13px;color:#000;">fm_sys_KIVIDLine</div>
<div class="t" style="left:420px;top:705.10px;font-size:13px;color:#000;">Ja</div>
<div class="t" style="left:693px;top:705.10px;font-size:13px;color:#000;">Linie</div>
<div class="t" style="left:797px;top:705.10px;font-size:13px;color:#000;">VG_KONSTRUKTIONSLINIEN</div>
<div class="t" style="left:29px;top:762.10px;font-size:13px;color:#000;">Fotos und Dokumente</div>
<div class="t" style="left:233px;top:762.10px;font-size:13px;color:#000;">fm_sys_document</div>
<div class="t" style="left:420px;top:762.10px;font-size:13px;color:#000;">Ja</div>
<div class="t" style="left:693px;top:762.10px;font-size:13px;color:#000;">Symbol</div>
<div class="t" style="left:797px;top:762.10px;font-size:13px;color:#000;">FX_FOTO</div>
<div class="t" style="left:1451px;top:762.10px;font-size:13px;color:#000;">Foto</div>
<div class="t" style="left:29px;top:819.10px;font-size:13px;color:#000;">Feldvergleich</div>
<div class="t" style="left:233px;top:819.10px;font-size:13px;color:#000;">allg_hilfe_feldja</div>
<div class="t" style="left:420px;top:819.10px;font-size:13px;color:#000;">Ja</div>
<div class="t" style="left:693px;top:819.10px;font-size:13px;color:#000;">Symbol</div>
<div class="t" style="left:797px;top:819.10px;font-size:13px;color:#000;">Feldvergleich Ja</div>
<div class="t" style="left:29px;top:876.10px;font-size:13px;color:#000;">Feldvergleich</div>
<div class="t" style="left:233px;top:876.10px;font-size:13px;color:#000;">allg_hilfe_feldnein</div>
<div class="t" style="left:420px;top:876.10px;font-size:13px;color:#000;">Ja</div>
<div class="t" style="left:693px;top:876.10px;font-size:13px;color:#000;">Symbol</div>
<div class="t" style="left:797px;top:876.10px;font-size:13px;color:#000;">Feldvergleich Nein</div>
<div class="t" style="left:29px;top:931.10px;font-size:13px;color:#000;">Abstand [m]</div>
<div class="t" style="left:233px;top:931.10px;font-size:13px;color:#000;">allg_mass_abstand</div>
<div class="t" style="left:420px;top:931.10px;font-size:13px;color:#000;">Ja</div>
<div class="t" style="left:693px;top:931.10px;font-size:13px;color:#000;">Linie</div>
<div class="t" style="left:797px;top:931.10px;font-size:13px;color:#000;">Maß Abstand [m]</div>
<div class="t" style="left:29px;top:999.10px;font-size:13px;color:#000;">Bemaßung [cm]</div>
<div class="t" style="left:233px;top:999.10px;font-size:13px;color:#000;">allg_mass_allg_bem_cm</div>
<div class="t" style="left:420px;top:999.10px;font-size:13px;color:#000;">Ja</div>
<div class="t" style="left:693px;top:999.10px;font-size:13px;color:#000;">Fläche</div>
<div class="t" style="left:797px;top:999.10px;font-size:13px;color:#000;">Bemaßung [cm]</div>
<div class="t" style="left:693px;top:667.10px;font-size:13px;color:#000;">Text</div>
<div class="t" style="left:693px;top:724.10px;font-size:13px;color:#000;">Text</div>
<div class="t" style="left:693px;top:781.10px;font-size:13px;color:#000;">Text</div>
<div class="t" style="left:693px;top:838.10px;font-size:13px;color:#000;">Text</div>
<div class="t" style="left:693px;top:895.10px;font-size:13px;color:#000;">Text</div>
<div class="t" style="left:693px;top:965.10px;font-size:13px;color:#000;">Text</div>
<div class="t" style="left:693px;top:1033.10px;font-size:13px;color:#000;">Text</div>
<div class="t" style="left:693px;top:948.10px;font-size:13px;color:#000;">Stützpunkt</div>
<div class="t" style="left:693px;top:1016.10px;font-size:13px;color:#000;">Stützpunkt</div>
<div class="t" style="left:464px;top:762.10px;font-size:13px;color:#000;">doc_type=Foto</div>
<div class="t" style="right:839px;top:762.10px;font-size:13px;color:#000;">5</div>
<div class="t" style="right:790px;top:762.10px;font-size:13px;color:#000;">100</div>
<div class="t" style="right:720px;top:762.10px;font-size:13px;color:#000;">100</div>
<div class="t" style="left:1748px;top:762.10px;font-size:13px;color:#000;">hyperlink</div>
<div class="t" style="left:942px;top:781.10px;font-size:13px;color:#000;">arial</div>
<div class="t" style="right:1006px;top:781.10px;font-size:13px;color:#000;">0,5</div>
<div class="t" style="right:839px;top:781.10px;font-size:13px;color:#000;">5</div>
<div class="t" style="right:839px;top:819.10px;font-size:13px;color:#000;">112</div>
<div class="t" style="right:435px;top:819.10px;font-size:13px;color:#000;">FX_Ja</div>
<div class="t" style="right:839px;top:876.10px;font-size:13px;color:#000;">1</div>
<div class="t" style="right:435px;top:876.10px;font-size:13px;color:#000;">FX_Nein</div>
<div class="t" style="right:1006px;top:1033.10px;font-size:13px;color:#000;">0,25</div>
<div style="left:940px;top:1031px;width:52px;height:16px;overflow:hidden">
<div class="t" style="left:3px;top:2.10px;font-size:13px;color:#000;">Style-Arial</div>
</div>
<div class="t" style="left:1597px;top:531.10px;font-size:13px;color:#000;">Shape.X=X</div>
<div class="t" style="left:1597px;top:548.10px;font-size:13px;color:#000;">Shape.Y=Y</div>
<div class="t" style="left:1597px;top:565.10px;font-size:13px;color:#000;">Shape.Z=Z</div>
<div class="t" style="left:1597px;top:582.10px;font-size:13px;color:#000;">PNR=PNR</div>
<div style="left:0px;top:0px;width:2027px;height:78px;background:#217346;"></div>
<svg style="left:0;top:0" width="2027" height="78"><rect x="1401" y="0" width="5" height="23" fill="#1e6840"/><rect x="1412" y="0" width="4" height="33" fill="#1e6840"/><rect x="1422" y="0" width="5" height="23" fill="#1e6840"/><rect x="1431" y="0" width="5" height="45" fill="#1e6840"/><rect x="1443" y="0" width="4" height="29" fill="#1e6840"/><clipPath id="semi"><circle cx="1536" cy="-17" r="69"/></clipPath><g clip-path="url(#semi)"><path d="M1467 -20 L1467 60 L1510 60 L1510 -20 Z" fill="#1e6840"/><rect x="1524" y="-20" width="16" height="80" fill="#1e6840"/><rect x="1549" y="-20" width="5" height="80" fill="#1e6840"/><rect x="1558" y="-20" width="5" height="80" fill="#1e6840"/><rect x="1567" y="-20" width="4" height="80" fill="#1e6840"/><rect x="1575" y="-20" width="4" height="80" fill="#1e6840"/><rect x="1583" y="-20" width="4" height="80" fill="#1e6840"/><rect x="1591" y="-20" width="4" height="80" fill="#1e6840"/><rect x="1600" y="-20" width="5" height="80" fill="#1e6840"/></g><circle cx="1634" cy="-2" r="19" fill="#1e6840"/><circle cx="1705.5" cy="30.3" r="23.5" fill="none" stroke="#1e6840" stroke-width="8.8"/><circle cx="1705.5" cy="30.3" r="11" fill="#1e6840"/><circle cx="1827" cy="-10" r="70" fill="none" stroke="#1e6840" stroke-width="24"/><clipPath id="big"><circle cx="1827" cy="-10" r="58"/></clipPath><g clip-path="url(#big)"><path d="M1760 -10 L1768 -10 L1848 70 L1840 70 Z" fill="#1e6840"/><path d="M1774 -10 L1782 -10 L1862 70 L1854 70 Z" fill="#1e6840"/><path d="M1788 -10 L1796 -10 L1876 70 L1868 70 Z" fill="#1e6840"/><path d="M1802 -10 L1810 -10 L1890 70 L1882 70 Z" fill="#1e6840"/><path d="M1816 -10 L1824 -10 L1904 70 L1896 70 Z" fill="#1e6840"/><path d="M1830 -10 L1838 -10 L1918 70 L1910 70 Z" fill="#1e6840"/></g><path d="M1950 0 L1959 0 L1914 45 L1905 45 Z" fill="#1e6840"/><path d="M1966 0 L1975 0 L1930 45 L1921 45 Z" fill="#1e6840"/><path d="M1982 0 L1991 0 L1946 45 L1937 45 Z" fill="#1e6840"/><path d="M1998 0 L2007 0 L1962 45 L1953 45 Z" fill="#1e6840"/><path d="M2014 0 L2023 0 L1978 45 L1969 45 Z" fill="#1e6840"/></svg>
<div style="left:0px;top:0px;width:2027px;height:1px;background:#8a8a8a;"></div>
<div style="left:0px;top:0px;width:1px;height:1098px;background:#8a8a8a;"></div>
<svg style="left:31px;top:11px" width="17" height="16" viewBox="0 0 17 16"><rect x="0" y="0" width="17" height="16" rx="1.5" fill="#fff"/><rect x="2" y="1.5" width="12.5" height="7.5" fill="#217346"/><rect x="4" y="11" width="8" height="5" fill="#217346"/><rect x="6" y="12.3" width="2.5" height="3.7" fill="#fff"/></svg>
<svg style="left:64px;top:11px" width="21" height="17" viewBox="0 0 21 17"><path d="M2 6 L8 1 M2 6 L8 11 M2 6 L12 6 C17 6 19 9 19 12 C19 14.5 17 16 14 16" fill="none" stroke="#5f9c78" stroke-width="2.6"/></svg>
<svg style="left:90px;top:17px" width="7" height="4" viewBox="0 0 7 4"><path d="M0 0 L7 0 L3.5 4 Z" fill="#5f9c78"/></svg>
<svg style="left:107px;top:11px" width="21" height="17" viewBox="0 0 21 17"><path d="M19 6 L13 1 M19 6 L13 11 M19 6 L9 6 C4 6 2 9 2 12 C2 14.5 3.5 16 6 16.5" fill="none" stroke="#5f9c78" stroke-width="2.6"/></svg>
<svg style="left:133px;top:17px" width="7" height="4" viewBox="0 0 7 4"><path d="M0 0 L7 0 L3.5 4 Z" fill="#5f9c78"/></svg>
<svg style="left:155px;top:17px" width="7" height="8" viewBox="0 0 7 8"><rect x="0" y="0.5" width="6" height="1.3" fill="#fff"/><path d="M0 3.5 L6.5 3.5 L3.25 7 Z" fill="#fff"/></svg>
<div class="t" style="left:713px;width:600px;text-align:center;top:17.94px;font-size:12px;color:#c9ddd0;transform-origin:50% 0;transform:scaleX(0.9842);white-space:pre;">DXF-Umsetzung_Standard.xls  [Kompatibilitätsmodus] - Excel</div>
<svg style="left:1836px;top:12px" width="17" height="14" viewBox="0 0 17 14"><rect x="0.5" y="0.5" width="15" height="12" fill="none" stroke="#9dc3aa"/><path d="M1 3.5 L15 3.5 M8 11 L8 6 M5.5 8 L8 5.5 L10.5 8" fill="none" stroke="#9dc3aa"/></svg>
<div style="left:1891px;top:19px;width:12px;height:1px;background:#9dc3aa;"></div>
<svg style="left:1942px;top:13px" width="13" height="13" viewBox="0 0 13 13"><rect x="0.5" y="0.5" width="11.5" height="11.5" fill="none" stroke="#9dc3aa"/></svg>
<svg style="left:1994px;top:12px" width="14" height="14" viewBox="0 0 14 14"><path d="M0.5 0.5 L12.5 12.5 M12.5 0.5 L0.5 12.5" stroke="#9dc3aa" stroke-width="1.2"/></svg>
<div style="left:86px;top:45px;width:60px;height:33px;background:#f1f1f1;"></div>
<div class="t" style="left:23.3px;top:52.86px;font-size:16px;color:#ffffff;transform-origin:0 0;transform:scaleX(0.9368);">Datei</div>
<div class="t" style="left:99.5px;top:52.86px;font-size:16px;color:#217346;transform-origin:0 0;transform:scaleX(0.9320);">Start</div>
<div class="t" style="left:161.4px;top:52.86px;font-size:16px;color:#ffffff;transform-origin:0 0;transform:scaleX(0.9498);">Einfügen</div>
<div class="t" style="left:252.4px;top:52.86px;font-size:16px;color:#ffffff;transform-origin:0 0;transform:scaleX(0.9709);">Seitenlayout</div>
<div class="t" style="left:368px;top:52.86px;font-size:16px;color:#ffffff;transform-origin:0 0;transform:scaleX(0.9815);">Formeln</div>
<div class="t" style="left:456.3px;top:52.86px;font-size:16px;color:#ffffff;transform-origin:0 0;transform:scaleX(0.9367);">Daten</div>
<div class="t" style="left:527.3px;top:52.86px;font-size:16px;color:#ffffff;transform-origin:0 0;transform:scaleX(0.9869);">Überprüfen</div>
<div class="t" style="left:637.5px;top:52.86px;font-size:16px;color:#ffffff;transform-origin:0 0;transform:scaleX(0.9587);">Ansicht</div>
<div class="t" style="left:718.3px;top:52.86px;font-size:16px;color:#ffffff;transform-origin:0 0;transform:scaleX(0.9188);">PDF-XChange</div>
<svg style="left:844px;top:50px" width="18" height="22" viewBox="0 0 18 22"><path d="M8.5 1.5 C4.5 1.5 2 4.5 2 8 C2 10.5 3.5 12 4.8 13.6 C5.5 14.5 5.8 15.3 5.8 16.3 L11.2 16.3 C11.2 15.3 11.5 14.5 12.2 13.6 C13.5 12 15 10.5 15 8 C15 4.5 12.5 1.5 8.5 1.5 Z M6 18.3 L11 18.3 M6.8 20.3 L10.2 20.3" fill="none" stroke="#d5e5da" stroke-width="1.3"/></svg>
<div class="t" style="left:867.8px;top:52.86px;font-size:16px;color:#e3eee7;transform-origin:0 0;transform:scaleX(0.9503);">Was möchten Sie tun?</div>
<div style="left:1902px;top:45px;width:109px;height:33px;background:#1a5c36;"></div>
<svg style="left:1910px;top:49px" width="20" height="22" viewBox="0 0 20 22"><circle cx="9" cy="6.5" r="5" fill="none" stroke="#fff" stroke-width="1.4"/><path d="M1 20.5 C1 15 4 12 9 12 C11 12 12.5 12.5 13.5 13.3" fill="none" stroke="#fff" stroke-width="1.4"/><path d="M15.5 13.5 L15.5 21 M11.8 17.3 L19.2 17.3" stroke="#fff" stroke-width="1.4"/></svg>
<div class="t" style="left:1934.2px;top:51.86px;font-size:16px;color:#ffffff;transform-origin:0 0;transform:scaleX(0.9438);">Freigeben</div>
<div style="left:0px;top:78px;width:2027px;height:121px;background:#f1f1f1;"></div>
<div style="left:1px;top:199px;width:2027px;height:1px;background:#d4d4d4;"></div>
<div style="left:241px;top:82px;width:1px;height:113px;background:#d2d2d2;"></div>
<div style="left:496px;top:82px;width:1px;height:113px;background:#d2d2d2;"></div>
<div style="left:893px;top:82px;width:1px;height:113px;background:#d2d2d2;"></div>
<div style="left:1067px;top:82px;width:1px;height:113px;background:#d2d2d2;"></div>
<div style="left:1440px;top:82px;width:1px;height:113px;background:#d2d2d2;"></div>
<div style="left:1632px;top:82px;width:1px;height:113px;background:#d2d2d2;"></div>
<div style="left:1970px;top:82px;width:1px;height:113px;background:#d2d2d2;"></div>
<div class="t" style="left:56px;top:182.10px;font-size:13px;color:#666666;transform-origin:0 0;transform:scaleX(1.1367);">Zwischenablage</div>
<div class="t" style="left:328.5px;top:182.10px;font-size:13px;color:#666666;transform-origin:0 0;transform:scaleX(1.1343);">Schriftart</div>
<div class="t" style="left:645.3px;top:182.10px;font-size:13px;color:#666666;transform-origin:0 0;transform:scaleX(1.1215);">Ausrichtung</div>
<div class="t" style="left:955.5px;top:182.10px;font-size:13px;color:#666666;transform-origin:0 0;transform:scaleX(1.1069);">Zahl</div>
<div class="t" style="left:1201.4px;top:182.10px;font-size:13px;color:#666666;transform-origin:0 0;transform:scaleX(1.1489);">Formatvorlagen</div>
<div class="t" style="left:1516.3px;top:182.10px;font-size:13px;color:#666666;transform-origin:0 0;transform:scaleX(1.1349);">Zellen</div>
<div class="t" style="left:1765.5px;top:182.10px;font-size:13px;color:#666666;transform-origin:0 0;transform:scaleX(1.1321);">Bearbeiten</div>
<svg style="left:226px;top:184px" width="10" height="10" viewBox="0 0 10 10"><path d="M0.5 8 L0.5 0.5 L8 0.5" fill="none" stroke="#6d6d6d"/><path d="M3 3 L8.5 8.5 M9 5 L9 9 L5 9" fill="none" stroke="#6d6d6d" stroke-width="1.1"/></svg>
<svg style="left:481px;top:184px" width="10" height="10" viewBox="0 0 10 10"><path d="M0.5 8 L0.5 0.5 L8 0.5" fill="none" stroke="#6d6d6d"/><path d="M3 3 L8.5 8.5 M9 5 L9 9 L5 9" fill="none" stroke="#6d6d6d" stroke-width="1.1"/></svg>
<svg style="left:877px;top:184px" width="10" height="10" viewBox="0 0 10 10"><path d="M0.5 8 L0.5 0.5 L8 0.5" fill="none" stroke="#6d6d6d"/><path d="M3 3 L8.5 8.5 M9 5 L9 9 L5 9" fill="none" stroke="#6d6d6d" stroke-width="1.1"/></svg>
<svg style="left:1052px;top:184px" width="10" height="10" viewBox="0 0 10 10"><path d="M0.5 8 L0.5 0.5 L8 0.5" fill="none" stroke="#6d6d6d"/><path d="M3 3 L8.5 8.5 M9 5 L9 9 L5 9" fill="none" stroke="#6d6d6d" stroke-width="1.1"/></svg>
<svg style="left:2003px;top:183px" width="14" height="10" viewBox="0 0 14 10"><path d="M1 8.5 L6.5 2.5 L12 8.5" fill="none" stroke="#6d6d6d" stroke-width="2.2"/></svg>
<svg style="left:23px;top:87px" width="36" height="40" viewBox="0 0 36 40"><rect x="1" y="5" width="27" height="31" rx="2" fill="#eac17a" opacity="0.95"/><rect x="6" y="3" width="17" height="6" rx="1" fill="#7a7a7a"/><rect x="11" y="0.5" width="7" height="4" rx="1" fill="#7a7a7a"/><rect x="13" y="2" width="3" height="2" fill="#f1f1f1"/><path d="M20.5 19.5 L30.5 19.5 L34.5 23.5 L34.5 38.5 L20.5 38.5 Z" fill="#fff" stroke="#7a7a7a"/><path d="M30.5 19.5 L30.5 23.5 L34.5 23.5" fill="none" stroke="#7a7a7a"/></svg>
<div class="t" style="left:7.6px;top:132.86px;font-size:16px;color:#444444;transform-origin:0 0;transform:scaleX(0.9498);">Einfügen</div>
<svg style="left:34px;top:161px" width="7" height="4" viewBox="0 0 7 4"><path d="M0 0 L7 0 L3.5 4 Z" fill="#6d6d6d"/></svg>
<svg style="left:76px;top:88px" width="17" height="18" viewBox="0 0 17 18"><path d="M4 0.5 L11.5 11 M13 0.5 L5.5 11" stroke="#6d6d6d" stroke-width="2"/><circle cx="3.8" cy="14" r="2.9" fill="none" stroke="#3f7dc1" stroke-width="1.2"/><circle cx="13.2" cy="14" r="2.9" fill="none" stroke="#3f7dc1" stroke-width="1.2"/></svg>
<div class="t" style="left:99.7px;top:90.86px;font-size:16px;color:#444444;transform-origin:0 0;transform:scaleX(0.9451);">Ausschneiden</div>
<svg style="left:76px;top:119px" width="18" height="19" viewBox="0 0 18 19"><path d="M0.5 0.5 L7 0.5 L9.5 3 L9.5 12.5 L0.5 12.5 Z" fill="#fff" stroke="#6d6d6d"/><path d="M2.5 4 L7 4 M2.5 6.5 L7.5 6.5 M2.5 9 L7.5 9" stroke="#3f7dc1"/><path d="M7.5 5.5 L14 5.5 L17 8.5 L17 18 L7.5 18 Z" fill="#fff" stroke="#6d6d6d"/><path d="M9.5 10 L15 10 M9.5 12.5 L15 12.5 M9.5 15 L15 15" stroke="#3f7dc1"/></svg>
<div class="t" style="left:99.7px;top:121.86px;font-size:16px;color:#444444;transform-origin:0 0;transform:scaleX(0.9446);">Kopieren</div>
<svg style="left:171px;top:127px" width="7" height="4" viewBox="0 0 7 4"><path d="M0 0 L7 0 L3.5 4 Z" fill="#6d6d6d"/></svg>
<svg style="left:76px;top:150px" width="18" height="16" viewBox="0 0 18 16"><path d="M0.5 8 L7 5 L11 9.5 L8.5 15.5 Z" fill="#eac17a"/><path d="M6.5 5.5 L10.5 2 L13.5 5 L10.5 9.5 Z" fill="#6d6d6d"/><path d="M11 2 L14 0 L17 3 L14.5 5" fill="#6d6d6d"/></svg>
<div class="t" style="left:99.7px;top:150.86px;font-size:16px;color:#444444;transform-origin:0 0;transform:scaleX(0.9810);">Format übertragen</div>
<div style="left:246px;top:93px;width:133px;height:29px;background:#fff;box-sizing:border-box;border:1px solid #c6c6c6"></div>
<div style="left:378px;top:93px;width:58px;height:29px;background:#fff;box-sizing:border-box;border:1px solid #c6c6c6"></div>
<div class="t" style="left:249.2px;top:100.86px;font-size:16px;color:#444444;transform-origin:0 0;transform:scaleX(0.9683);">Arial</div>
<svg style="left:367px;top:105px" width="7" height="4" viewBox="0 0 7 4"><path d="M0 0 L7 0 L3.5 4 Z" fill="#6d6d6d"/></svg>
<div class="t" style="left:383.4px;top:100.86px;font-size:16px;color:#444444;transform-origin:0 0;transform:scaleX(0.9159);">10</div>
<svg style="left:424px;top:105px" width="7" height="4" viewBox="0 0 7 4"><path d="M0 0 L7 0 L3.5 4 Z" fill="#6d6d6d"/></svg>
<svg style="left:444px;top:97px" width="16" height="17" viewBox="0 0 16 17"><path d="M1 16 L6 3.5 L11 16 M3 11.5 L9 11.5" fill="none" stroke="#6d6d6d" stroke-width="1.8"/><path d="M10.5 4 L13 1.2 L15.5 4 Z" fill="#3f7dc1"/></svg>
<svg style="left:471px;top:97px" width="16" height="17" viewBox="0 0 16 17"><path d="M1 16 L6 3.5 L11 16 M3 11.5 L9 11.5" fill="none" stroke="#6d6d6d" stroke-width="1.8"/><path d="M10.5 1 L15.5 1 L13 3.8 Z" fill="#3f7dc1"/></svg>
<div class="t" style="left:255px;top:139.86px;font-size:16px;color:#555;font-weight:bold;transform-origin:0 0;transform:scaleX(0.8179);">F</div>
<div class="t" style="left:281px;top:139.86px;font-size:16px;color:#555;font-weight:bold;transform-origin:0 0;transform:scaleX(1.0811);font-style:italic;">K</div>
<div class="t" style="left:310px;top:139.86px;font-size:16px;color:#555;font-weight:bold;transform-origin:0 0;transform:scaleX(0.9341);">U</div>
<div style="left:310px;top:154px;width:11px;height:1.3px;background:#555;"></div>
<svg style="left:333px;top:146px" width="7" height="4" viewBox="0 0 7 4"><path d="M0 0 L7 0 L3.5 4 Z" fill="#6d6d6d"/></svg>
<div style="left:349px;top:137px;width:1px;height:22px;background:#d2d2d2;"></div>
<svg style="left:360px;top:137px" width="18" height="19" viewBox="0 0 18 19"><path d="M0.5 0.5 L16.5 0.5 L16.5 17 M0.5 0.5 L0.5 17 M8.5 0.5 L8.5 17 M0.5 8.5 L16.5 8.5" fill="none" stroke="#8a8a8a" stroke-dasharray="1 1"/><path d="M0 17.5 L17 17.5" stroke="#6d6d6d" stroke-width="1.2"/></svg>
<svg style="left:386px;top:146px" width="7" height="4" viewBox="0 0 7 4"><path d="M0 0 L7 0 L3.5 4 Z" fill="#6d6d6d"/></svg>
<div style="left:402px;top:137px;width:1px;height:22px;background:#d2d2d2;"></div>
<svg style="left:413px;top:137px" width="20" height="16" viewBox="0 0 20 16"><path d="M4 7.5 L10.5 1.5 L17 8 L10.5 14.5 Z" fill="#fff" stroke="#6d6d6d" stroke-width="1.2"/><path d="M8.5 3 L8.5 0.8 A1.5 1.5 0 0 1 11.5 0.8 L11.5 4" fill="none" stroke="#6d6d6d"/><path d="M17 6 C19 7 19.5 9 18.5 11.5" fill="none" stroke="#3f7dc1" stroke-width="1.8"/></svg>
<div style="left:411px;top:153px;width:22px;height:5px;background:#ffff00;"></div>
<svg style="left:439px;top:146px" width="7" height="4" viewBox="0 0 7 4"><path d="M0 0 L7 0 L3.5 4 Z" fill="#6d6d6d"/></svg>
<div class="t" style="left:458px;top:135.71px;font-size:17px;color:#555;font-weight:bold;transform-origin:0 0;transform:scaleX(0.9364);">A</div>
<div style="left:453px;top:153px;width:22px;height:5px;background:#ff0000;"></div>
<svg style="left:481px;top:146px" width="7" height="4" viewBox="0 0 7 4"><path d="M0 0 L7 0 L3.5 4 Z" fill="#6d6d6d"/></svg>
<svg style="left:506px;top:97px" width="20" height="11.600000000000001" viewBox="0 0 20 11.600000000000001"><rect x="0" y="0.0" width="18" height="1.2" fill="#6d6d6d"/><rect x="0" y="3.2" width="18" height="1.2" fill="#6d6d6d"/><rect x="0" y="6.4" width="18" height="1.2" fill="#6d6d6d"/></svg>
<svg style="left:534px;top:101px" width="20" height="14" viewBox="0 0 20 14"><rect x="0" y="0" width="18" height="1.2" fill="#6d6d6d"/><rect x="0" y="3" width="18" height="1.2" fill="#6d6d6d"/><rect x="0" y="6" width="18" height="1.2" fill="#6d6d6d"/><rect x="2" y="9" width="14" height="1.2" fill="#6d6d6d"/></svg>
<div style="left:557px;top:92px;width:28px;height:29px;background:#c5c5c5;"></div>
<svg style="left:562px;top:106px" width="20" height="11" viewBox="0 0 20 11"><rect x="0" y="0" width="18" height="1.2" fill="#6d6d6d"/><rect x="0" y="3" width="18" height="1.2" fill="#6d6d6d"/><rect x="2" y="6" width="14" height="1.2" fill="#6d6d6d"/></svg>
<div style="left:590px;top:96px;width:1px;height:22px;background:#d2d2d2;"></div>
<svg style="left:599px;top:96px" width="22" height="20" viewBox="0 0 22 20"><text x="0" y="13" font-size="13" font-family="Liberation Sans" fill="#555" transform="rotate(-45 6 9)">ab</text><path d="M8 18.5 L18.5 8 M13.5 7.5 L19 7.5 L19 13" fill="none" stroke="#555" stroke-width="1.3"/></svg>
<svg style="left:625px;top:105px" width="7" height="4" viewBox="0 0 7 4"><path d="M0 0 L7 0 L3.5 4 Z" fill="#6d6d6d"/></svg>
<svg style="left:667px;top:97px" width="22" height="20" viewBox="0 0 22 20"><rect x="1.5" y="1.5" width="11.5" height="5.2" fill="none" stroke="#6d6d6d"/><rect x="1.5" y="9" width="11.5" height="9.6" fill="none" stroke="#6d6d6d"/><path d="M3 3.5 L17.5 3.5 M3 12.8 L11 12.8 M3 15.5 L11 15.5" stroke="#3f7dc1" stroke-width="1"/><path d="M17.5 3.5 C21 5 20.5 10.5 14.5 10.5" fill="none" stroke="#3f7dc1" stroke-width="1.8"/><path d="M11.5 10.5 L15.5 7.5 L15.5 13.5 Z" fill="#3f7dc1"/></svg>
<div style="left:657px;top:86px;width:1px;height:83px;background:#d2d2d2;"></div>
<div class="t" style="left:691.2px;top:100.86px;font-size:16px;color:#444444;transform-origin:0 0;transform:scaleX(0.9608);">Textumbruch</div>
<svg style="left:508px;top:142px" width="20" height="14" viewBox="0 0 20 14"><rect x="0" y="0" width="14" height="1.2" fill="#6d6d6d"/><rect x="0" y="3" width="10" height="1.2" fill="#6d6d6d"/><rect x="0" y="6" width="14" height="1.2" fill="#6d6d6d"/><rect x="0" y="9" width="10" height="1.2" fill="#6d6d6d"/></svg>
<svg style="left:535px;top:142px" width="20" height="14" viewBox="0 0 20 14"><rect x="0" y="0" width="15" height="1.2" fill="#6d6d6d"/><rect x="2" y="3" width="11" height="1.2" fill="#6d6d6d"/><rect x="0" y="6" width="15" height="1.2" fill="#6d6d6d"/><rect x="2" y="9" width="11" height="1.2" fill="#6d6d6d"/></svg>
<svg style="left:564px;top:142px" width="20" height="14" viewBox="0 0 20 14"><rect x="0" y="0" width="14" height="1.2" fill="#6d6d6d"/><rect x="4" y="3" width="10" height="1.2" fill="#6d6d6d"/><rect x="0" y="6" width="14" height="1.2" fill="#6d6d6d"/><rect x="4" y="9" width="10" height="1.2" fill="#6d6d6d"/></svg>
<div style="left:590px;top:137px;width:1px;height:22px;background:#d2d2d2;"></div>
<svg style="left:601px;top:139px" width="19" height="17" viewBox="0 0 19 17"><path d="M0 0.6 L18 0.6 M9 3.6 L18 3.6 M9 6.6 L18 6.6 M9 9.6 L18 9.6 M9 12.6 L18 12.6 M0 15.6 L18 15.6" stroke="#6d6d6d" stroke-width="1.1"/><path d="M7.5 8.1 L2 8.1 M5 4.6 L1.2 8.1 L5 11.6" fill="none" stroke="#3f7dc1" stroke-width="2.4"/></svg>
<svg style="left:629px;top:139px" width="19" height="17" viewBox="0 0 19 17"><path d="M0 0.6 L18 0.6 M9 3.6 L18 3.6 M9 6.6 L18 6.6 M9 9.6 L18 9.6 M9 12.6 L18 12.6 M0 15.6 L18 15.6" stroke="#6d6d6d" stroke-width="1.1"/><path d="M0 8.1 L6 8.1 M3 4.6 L6.8 8.1 L3 11.6" fill="none" stroke="#3f7dc1" stroke-width="2.4"/></svg>
<svg style="left:667px;top:138px" width="20" height="20" viewBox="0 0 20 20"><rect x="0.6" y="0.6" width="18.4" height="18" fill="#fff" stroke="#6d6d6d" stroke-width="1.1"/><path d="M0.5 4 L19 4 M0.5 15.2 L19 15.2 M9.5 0.5 L9.5 4 M9.5 15.2 L9.5 19" stroke="#6d6d6d" stroke-width="1.1"/><path d="M2.5 9.6 L16.5 9.6 M5.5 6.8 L2.5 9.6 L5.5 12.4 M13.5 6.8 L16.5 9.6 L13.5 12.4" fill="none" stroke="#3f7dc1" stroke-width="1.3"/></svg>
<div class="t" style="left:691.2px;top:141.86px;font-size:16px;color:#444444;transform-origin:0 0;transform:scaleX(0.9810);">Verbinden und zentrieren</div>
<svg style="left:877px;top:147px" width="7" height="4" viewBox="0 0 7 4"><path d="M0 0 L7 0 L3.5 4 Z" fill="#6d6d6d"/></svg>
<div style="left:898px;top:93px;width:165px;height:29px;background:#fff;box-sizing:border-box;border:1px solid #c6c6c6"></div>
<div class="t" style="left:901.7px;top:100.86px;font-size:16px;color:#444444;transform-origin:0 0;transform:scaleX(0.9486);">Standard</div>
<svg style="left:1051px;top:105px" width="7" height="4" viewBox="0 0 7 4"><path d="M0 0 L7 0 L3.5 4 Z" fill="#6d6d6d"/></svg>
<svg style="left:901px;top:137px" width="22" height="21" viewBox="0 0 22 21"><rect x="1" y="1" width="19" height="11" fill="#3f7dc1"/><rect x="3.5" y="3.5" width="14" height="6" fill="#fff"/><circle cx="10.5" cy="6.5" r="2.2" fill="#3f7dc1"/><g fill="#f1f1f1" stroke="#e8bf7a" stroke-width="1.2"><ellipse cx="17" cy="11.5" rx="4" ry="1.6"/><ellipse cx="17" cy="14" rx="4" ry="1.6"/><ellipse cx="17" cy="16.5" rx="4" ry="1.6"/><ellipse cx="11" cy="15" rx="4" ry="1.6"/><ellipse cx="11" cy="17.5" rx="4" ry="1.6"/><ellipse cx="11" cy="20" rx="4" ry="0.9"/></g></svg>
<svg style="left:929px;top:146px" width="7" height="4" viewBox="0 0 7 4"><path d="M0 0 L7 0 L3.5 4 Z" fill="#6d6d6d"/></svg>
<div class="t" style="left:946px;top:138.02px;font-size:19px;color:#555;transform-origin:0 0;transform:scaleX(0.8872);">%</div>
<div class="t" style="left:972.8px;top:140.94px;font-size:12px;color:#555;transform-origin:0 0;transform:scaleX(0.8587);">000</div>
<div style="left:1001px;top:137px;width:1px;height:22px;background:#d2d2d2;"></div>
<svg style="left:1012px;top:137px" width="18" height="20" viewBox="0 0 18 20"><text x="8.3" y="8.6" font-size="10" font-family="Liberation Sans" fill="#555" stroke="#555" stroke-width="0.35">0</text><text x="3.2" y="18.3" font-size="10" font-family="Liberation Sans" fill="#555" stroke="#555" stroke-width="0.35">,00</text><path d="M8.5 5.6 L2.5 5.6 M5 2.6 L1.5 5.6 L5 8.6" fill="none" stroke="#3f7dc1" stroke-width="2.2"/></svg>
<svg style="left:1040px;top:137px" width="18" height="20" viewBox="0 0 18 20"><text x="3.5" y="8.6" font-size="10" font-family="Liberation Sans" fill="#555" stroke="#555" stroke-width="0.35">,00</text><text x="8.6" y="18.3" font-size="10" font-family="Liberation Sans" fill="#555" stroke="#555" stroke-width="0.35">,0</text><path d="M1 14.6 L7 14.6 M4.5 11.6 L8 14.6 L4.5 17.6" fill="none" stroke="#3f7dc1" stroke-width="2.2"/></svg>
<svg style="left:1109px;top:91px" width="39" height="36" viewBox="0 0 39 36"><rect x="0.5" y="0.5" width="33" height="27" fill="#fff" stroke="#7a7a7a"/><path d="M0.5 7.5 L33.5 7.5 M0.5 14 L33.5 14 M0.5 21 L33.5 21 M10.5 0.5 L10.5 27.5 M22.5 0.5 L22.5 27.5" stroke="#7a7a7a"/><rect x="11" y="1" width="6" height="6" fill="#d9573a"/><rect x="11" y="8" width="11" height="6" fill="#3f7dc1"/><rect x="11" y="14.5" width="8" height="6" fill="#d9573a"/><rect x="11" y="21.5" width="6" height="6" fill="#3f7dc1"/><rect x="18.5" y="19.5" width="18" height="15" fill="#fff" stroke="#7a7a7a"/><text x="23" y="31.5" font-size="13" font-family="Liberation Sans" fill="#444">≠</text></svg>
<div class="t" style="left:1097.5px;top:132.86px;font-size:16px;color:#444444;transform-origin:0 0;transform:scaleX(0.9593);">Bedingte</div>
<div class="t" style="left:1074.4px;top:154.86px;font-size:16px;color:#444444;transform-origin:0 0;transform:scaleX(0.9910);">Formatierung</div>
<svg style="left:1173px;top:161px" width="7" height="4" viewBox="0 0 7 4"><path d="M0 0 L7 0 L3.5 4 Z" fill="#6d6d6d"/></svg>
<svg style="left:1214px;top:90px" width="40" height="37" viewBox="0 0 40 37"><rect x="0.5" y="0.5" width="33" height="27" fill="#fff" stroke="#7a7a7a"/><rect x="8" y="7" width="25" height="20" fill="#c5d8ee"/><path d="M0.5 7 L33.5 7 M0.5 14 L33.5 14 M0.5 21 L33.5 21 M8 0.5 L8 27.5 M16.5 0.5 L16.5 27.5 M25 0.5 L25 27.5" stroke="#8a8a8a"/><path d="M26 22 L36 10 L38.5 12.5 L29 24 Z" fill="#7a7a7a"/><path d="M10 35.5 C12 30 15 26 20 25 C24 25 25 28 23 31 C21 34 15 35.5 10 35.5 Z" fill="#3f7dc1"/><path d="M19 28 C21 27 22 28 21.5 30" stroke="#fff" stroke-width="1" fill="none"/></svg>
<div class="t" style="left:1196.2px;top:132.86px;font-size:16px;color:#444444;transform-origin:0 0;transform:scaleX(0.9339);">Als Tabelle</div>
<div class="t" style="left:1185px;top:154.86px;font-size:16px;color:#444444;transform-origin:0 0;transform:scaleX(1.0109);">formatieren</div>
<svg style="left:1271px;top:161px" width="7" height="4" viewBox="0 0 7 4"><path d="M0 0 L7 0 L3.5 4 Z" fill="#6d6d6d"/></svg>
<svg style="left:1339px;top:87px" width="41" height="40" viewBox="0 0 41 40"><rect x="0.5" y="0.5" width="33" height="28" fill="#fff" stroke="#7a7a7a"/><path d="M0.5 6.5 L33.5 6.5 M0.5 22 L33.5 22 M7 0.5 L7 28.5 M27 0.5 L27 28.5" stroke="#8a8a8a"/><rect x="7.5" y="7" width="19" height="14.5" fill="#c5d8ee"/><path d="M27 24 L37 12 L39.5 14.5 L30 26 Z" fill="#7a7a7a"/><path d="M11 38.5 C13 33 16 29 21 28 C25 28 26 31 24 34 C22 37 16 38.5 11 38.5 Z" fill="#3f7dc1"/></svg>
<div class="t" style="left:1283.2px;top:132.86px;font-size:16px;color:#444444;transform-origin:0 0;transform:scaleX(0.9914);">Zellenformatvorlagen</div>
<svg style="left:1355px;top:161px" width="7" height="4" viewBox="0 0 7 4"><path d="M0 0 L7 0 L3.5 4 Z" fill="#6d6d6d"/></svg>
<svg style="left:1458px;top:89px" width="38" height="36" viewBox="0 0 38 36"><g fill="#fff" stroke="#7a7a7a"><rect x="3.5" y="0.5" width="18" height="7"/><rect x="3.5" y="22.5" width="18" height="12"/></g><path d="M12.5 0.5 L12.5 7.5 M3.5 28.5 L21.5 28.5 M12.5 22.5 L12.5 34.5" stroke="#7a7a7a"/><rect x="17.5" y="11.5" width="19" height="7" fill="#c5d8ee" stroke="#7a7a7a"/><path d="M27 11.5 L27 18.5" stroke="#7a7a7a"/><path d="M1 15 L14 15 M6 10 L1 15 L6 20" fill="none" stroke="#3f7dc1" stroke-width="2.6"/></svg>
<div class="t" style="left:1447.6px;top:133.86px;font-size:16px;color:#444444;transform-origin:0 0;transform:scaleX(0.9498);">Einfügen</div>
<svg style="left:1474px;top:161px" width="7" height="4" viewBox="0 0 7 4"><path d="M0 0 L7 0 L3.5 4 Z" fill="#6d6d6d"/></svg>
<svg style="left:1525px;top:89px" width="38" height="34" viewBox="0 0 38 34"><g fill="#fff" stroke="#7a7a7a"><rect x="0.5" y="0.5" width="18" height="7"/><rect x="0.5" y="21.5" width="18" height="12"/></g><path d="M9.5 0.5 L9.5 7.5 M0.5 27.5 L18.5 27.5 M9.5 21.5 L9.5 33.5" stroke="#7a7a7a"/><rect x="7.5" y="11.5" width="12" height="7" fill="#c5d8ee" stroke="#7a7a7a"/><path d="M19 9 L35 21 M35 8 L19 22" stroke="#d9573a" stroke-width="2.4"/></svg>
<div class="t" style="left:1513.4px;top:133.86px;font-size:16px;color:#444444;transform-origin:0 0;transform:scaleX(0.9256);">Löschen</div>
<svg style="left:1538px;top:161px" width="7" height="4" viewBox="0 0 7 4"><path d="M0 0 L7 0 L3.5 4 Z" fill="#6d6d6d"/></svg>
<svg style="left:1582px;top:87px" width="36" height="39" viewBox="0 0 36 39"><path d="M1 2 L1 7 M35 2 L35 7" stroke="#3f7dc1"/><path d="M3 4.5 L33 4.5 M7 1.5 L3 4.5 L7 7.5 M29 1.5 L33 4.5 L29 7.5" fill="none" stroke="#3f7dc1" stroke-width="1.6"/><rect x="1.5" y="11" width="33" height="24" fill="#fff" stroke="#8a8a8a"/><path d="M1.5 18 L34.5 18 M1.5 28 L34.5 28 M9 11 L9 35 M18 11 L18 35 M27 11 L27 35" stroke="#8a8a8a"/><rect x="9.5" y="18.5" width="8" height="9" fill="#3f7dc1"/><path d="M1.5 35 L1.5 38 L10 38 L12 35 M12 35 L12 38 L20 38 L22 35" fill="#fff" stroke="#8a8a8a"/></svg>
<div class="t" style="left:1575.5px;top:133.86px;font-size:16px;color:#444444;transform-origin:0 0;transform:scaleX(0.9769);">Format</div>
<svg style="left:1597px;top:161px" width="7" height="4" viewBox="0 0 7 4"><path d="M0 0 L7 0 L3.5 4 Z" fill="#6d6d6d"/></svg>
<svg style="left:1642px;top:87px" width="17" height="16" viewBox="0 0 17 16"><path d="M15 3 L15 1 L1 1 L8 8 L1 15 L15 15 L15 13" fill="none" stroke="#555" stroke-width="2"/></svg>
<div class="t" style="left:1665.8px;top:88.86px;font-size:16px;color:#444444;transform-origin:0 0;transform:scaleX(0.9768);">AutoSumme</div>
<svg style="left:1762px;top:94px" width="7" height="4" viewBox="0 0 7 4"><path d="M0 0 L7 0 L3.5 4 Z" fill="#6d6d6d"/></svg>
<svg style="left:1641px;top:114px" width="19" height="20" viewBox="0 0 19 20"><rect x="1.5" y="2.5" width="16" height="16" fill="#fff" stroke="#6d6d6d"/><rect x="1" y="1" width="17" height="2" fill="#6d6d6d"/><path d="M9.5 6 L9.5 14 M6 11 L9.5 14.5 L13 11" fill="none" stroke="#3f7dc1" stroke-width="2.2"/></svg>
<div class="t" style="left:1665.8px;top:116.86px;font-size:16px;color:#444444;transform-origin:0 0;transform:scaleX(0.9481);">Füllbereich</div>
<svg style="left:1745px;top:123px" width="7" height="4" viewBox="0 0 7 4"><path d="M0 0 L7 0 L3.5 4 Z" fill="#6d6d6d"/></svg>
<svg style="left:1642px;top:143px" width="20" height="19" viewBox="0 0 20 19"><path d="M1 12 L10 2 L15 6.5 L6 16.5 Z" fill="#e46b84"/><path d="M1 12 L4 9 L9 13.5 L6 16.5 Z" fill="#f4b3c0"/><path d="M7 17.5 L18.5 17.5" stroke="#6d6d6d" stroke-width="1.2"/></svg>
<div class="t" style="left:1665.8px;top:145.86px;font-size:16px;color:#444444;transform-origin:0 0;transform:scaleX(0.9174);">Löschen</div>
<svg style="left:1726px;top:152px" width="7" height="4" viewBox="0 0 7 4"><path d="M0 0 L7 0 L3.5 4 Z" fill="#6d6d6d"/></svg>
<svg style="left:1806px;top:87px" width="37" height="35" viewBox="0 0 37 35"><text x="0.5" y="17" font-size="19.5" font-family="Liberation Sans" fill="#3f7dc1" stroke="#3f7dc1" stroke-width="0.6">A</text><text x="1.3" y="33.8" font-size="18.5" font-family="Liberation Sans" fill="#9a52c4" stroke="#9a52c4" stroke-width="0.6">Z</text><path d="M17 9.5 L35 9.5 L28 17 L28 27 L24 27 L24 17 Z" fill="#6d6d6d"/><path d="M19.5 11 L25.5 17 L25.5 25.5" fill="none" stroke="#fff" stroke-width="0.9"/></svg>
<div class="t" style="left:1776.5px;top:133.86px;font-size:16px;color:#444444;transform-origin:0 0;transform:scaleX(0.9785);">Sortieren und</div>
<div class="t" style="left:1796.6px;top:155.86px;font-size:16px;color:#444444;transform-origin:0 0;transform:scaleX(0.9628);">Filtern</div>
<svg style="left:1844px;top:161px" width="7" height="4" viewBox="0 0 7 4"><path d="M0 0 L7 0 L3.5 4 Z" fill="#6d6d6d"/></svg>
<svg style="left:1902px;top:88px" width="37" height="36" viewBox="0 0 37 36"><circle cx="23" cy="13" r="11" fill="#fff" stroke="#3f7dc1" stroke-width="2.4"/><path d="M4 32 L14.5 21.5" stroke="#3f7dc1" stroke-width="4.2" stroke-linecap="round"/></svg>
<div class="t" style="left:1879.5px;top:133.86px;font-size:16px;color:#444444;transform-origin:0 0;transform:scaleX(0.9531);">Suchen und</div>
<div class="t" style="left:1876.6px;top:155.86px;font-size:16px;color:#444444;transform-origin:0 0;transform:scaleX(0.9581);">Auswählen</div>
<svg style="left:1956px;top:161px" width="7" height="4" viewBox="0 0 7 4"><path d="M0 0 L7 0 L3.5 4 Z" fill="#6d6d6d"/></svg>
<div style="left:0px;top:200px;width:2027px;height:45px;background:#e6e6e6;"></div>
<div style="left:0px;top:0px;width:1px;height:1098px;background:#8a8a8a;"></div>
<div style="left:6px;top:210px;width:102px;height:26px;background:#ffffff;box-sizing:border-box;border:1px solid #c6c6c6"></div>
<div class="t" style="left:13.3px;top:216.25px;font-size:14px;color:#444444;transform-origin:0 0;transform:scaleX(0.9363);">M14</div>
<svg style="left:94px;top:220px" width="7" height="4" viewBox="0 0 7 4"><path d="M0 0 L7 0 L3.5 4 Z" fill="#6d6d6d"/></svg>
<div style="left:122px;top:218px;width:2px;height:2px;background:#a8a8a8;"></div>
<div style="left:122px;top:222px;width:2px;height:2px;background:#a8a8a8;"></div>
<div style="left:122px;top:226px;width:2px;height:2px;background:#a8a8a8;"></div>
<div style="left:138px;top:210px;width:110px;height:26px;background:#ffffff;box-sizing:border-box;border:1px solid #c6c6c6"></div>
<svg style="left:151px;top:218px" width="12" height="11" viewBox="0 0 12 11"><path d="M1 1 L11 10 M11 1 L1 10" stroke="#b8b8b8" stroke-width="1.4"/></svg>
<svg style="left:186px;top:217px" width="15" height="12" viewBox="0 0 15 12"><path d="M1 6 L5.5 10.5 L14 1.5" fill="none" stroke="#c2c2c2" stroke-width="2"/></svg>
<div class="t" style="left:223.5px;top:214.86px;font-size:16px;color:#666;font-family:'Liberation Serif',serif;font-style:italic;">f</div>
<div class="t" style="left:229.5px;top:216.94px;font-size:12px;color:#666;font-family:'Liberation Serif',serif;font-style:italic;">x</div>
<div style="left:251px;top:210px;width:1771px;height:26px;background:#ffffff;box-sizing:border-box;border:1px solid #c6c6c6"></div>
<svg style="left:2010px;top:220px" width="8" height="6" viewBox="0 0 8 6"><path d="M0.8 0.8 L4 4.5 L7.2 0.8" fill="none" stroke="#666" stroke-width="1.6"/></svg>
<div style="left:0px;top:1049px;width:2027px;height:28px;background:#e6e6e6;"></div>
<div style="left:1px;top:1049px;width:2005px;height:1px;background:#ababab;"></div>
<svg style="left:28px;top:1058px" width="5" height="8" viewBox="0 0 5 8"><path d="M4.5 0 L0 4 L4.5 8 Z" fill="#b4b4b4"/></svg>
<svg style="left:57px;top:1058px" width="5" height="8" viewBox="0 0 5 8"><path d="M0 0 L4.5 4 L0 8 Z" fill="#b4b4b4"/></svg>
<div style="left:101px;top:1053px;width:1px;height:20px;background:#bdbdbd;"></div>
<div class="t" style="left:114.5px;top:1055.25px;font-size:14px;color:#444444;transform-origin:0 0;transform:scaleX(0.9088);">Parameter</div>
<div style="left:188px;top:1049px;width:64px;height:25px;background:#ffffff;box-sizing:border-box;border-left:1px solid #c6c6c6;border-right:1px solid #c6c6c6"></div>
<div style="left:188px;top:1072px;width:64px;height:3px;background:#217346;"></div>
<div class="t" style="left:200.6px;top:1055.25px;font-size:14px;color:#217346;font-weight:bold;transform-origin:0 0;transform:scaleX(0.8908);">Export</div>
<svg style="left:285px;top:1055px" width="16" height="16" viewBox="0 0 16 16"><circle cx="8" cy="8" r="7.2" fill="none" stroke="#777" stroke-width="1.2"/><path d="M8 4 L8 12 M4 8 L12 8" stroke="#777" stroke-width="1.8"/></svg>
<div style="left:1295px;top:1058px;width:2px;height:2px;background:#a8a8a8;"></div>
<div style="left:1295px;top:1062px;width:2px;height:2px;background:#a8a8a8;"></div>
<div style="left:1295px;top:1066px;width:2px;height:2px;background:#a8a8a8;"></div>
<div style="left:1312px;top:1056px;width:690px;height:15px;background:#dadada;"></div>
<div style="left:1312px;top:1056px;width:580px;height:15px;background:#ffffff;box-sizing:border-box;border:1px solid #c6c6c6"></div>
<div style="left:1312px;top:1056px;width:15px;height:15px;background:#ffffff;box-sizing:border-box;border:1px solid #c6c6c6"></div>
<svg style="left:1316px;top:1059px" width="5" height="9" viewBox="0 0 5 9"><path d="M4.5 0 L0 4.5 L4.5 9 Z" fill="#777"/></svg>
<div style="left:1988px;top:1056px;width:15px;height:15px;background:#ffffff;box-sizing:border-box;border:1px solid #c6c6c6"></div>
<svg style="left:1993px;top:1059px" width="5" height="9" viewBox="0 0 5 9"><path d="M0 0 L4.5 4.5 L0 9 Z" fill="#777"/></svg>
<div style="left:2005px;top:245px;width:22px;height:804px;background:#e6e6e6;"></div>
<div style="left:2009px;top:263px;width:15px;height:786px;background:#dadada;"></div>
<div style="left:2009px;top:248px;width:15px;height:15px;background:#ffffff;box-sizing:border-box;border:1px solid #c6c6c6"></div>
<svg style="left:2012px;top:253px" width="9" height="5" viewBox="0 0 9 5"><path d="M0 5 L4.5 0 L9 5 Z" fill="#777"/></svg>
<div style="left:2009px;top:285px;width:15px;height:118px;background:#ffffff;box-sizing:border-box;border:1px solid #c6c6c6"></div>
<div style="left:2009px;top:1034px;width:15px;height:15px;background:#ffffff;box-sizing:border-box;border:1px solid #c6c6c6"></div>
<svg style="left:2012px;top:1039px" width="9" height="5" viewBox="0 0 9 5"><path d="M0 0 L9 0 L4.5 5 Z" fill="#777"/></svg>
<div style="left:0px;top:1077px;width:2027px;height:21px;background:#f1f1f1;"></div>
<div style="left:1px;top:1077px;width:2027px;height:1px;background:#d4d4d4;"></div>
<div class="t" style="left:8.5px;top:1081.10px;font-size:13px;color:#444444;transform-origin:0 0;transform:scaleX(0.8243);">Bereit</div>
<div style="left:1721px;top:1078px;width:38px;height:20px;background:#c8c8c8;"></div>
<svg style="left:1733px;top:1081px" width="14" height="14" viewBox="0 0 14 14"><path d="M0.5 0.5 L13.5 0.5 L13.5 13.5 L0.5 13.5 Z M0.5 4.8 L13.5 4.8 M0.5 9.2 L13.5 9.2 M4.8 0.5 L4.8 13.5 M9.2 0.5 L9.2 13.5" fill="none" stroke="#6d6d6d" stroke-width="1.3"/></svg>
<svg style="left:1771px;top:1081px" width="15" height="14" viewBox="0 0 15 14"><rect x="0.6" y="0.6" width="13.8" height="12.8" fill="none" stroke="#6d6d6d" stroke-width="1.2"/><rect x="3.5" y="3" width="8" height="8" fill="none" stroke="#6d6d6d" stroke-width="1"/><path d="M5 5.3 L10 5.3 M5 7.3 L10 7.3 M5 9.3 L10 9.3" stroke="#6d6d6d"/></svg>
<svg style="left:1809px;top:1081px" width="15" height="14" viewBox="0 0 15 14"><path d="M0.6 13.4 L0.6 0.6 L14.4 0.6 L14.4 13.4 Z M5 0.6 L5 7 M9 0.6 L9 7 L14.4 7" fill="none" stroke="#6d6d6d" stroke-width="1.2"/></svg>
<div style="left:1840px;top:1087px;width:6px;height:2px;background:#555;"></div>
<div style="left:1850px;top:1087px;width:100px;height:1px;background:#999;"></div>
<div style="left:1898px;top:1082px;width:4px;height:11px;background:#666;"></div>
<svg style="left:1954px;top:1083px" width="8" height="9" viewBox="0 0 8 9"><path d="M4 0 L4 9 M0 4.5 L8 4.5" stroke="#555" stroke-width="1.8"/></svg>
<div class="t" style="left:1978.7px;top:1080.94px;font-size:12px;color:#444444;transform-origin:0 0;transform:scaleX(0.8522);white-space:pre;">100 %</div>
<div style="left:0px;top:0px;width:1px;height:1098px;background:#8a8a8a;"></div>
<div style="left:0px;top:0px;width:2027px;height:1px;background:#8a8a8a;"></div>
<div style="left:1336px;top:466px;width:64px;height:2px;background:#ffffff;"></div>
<div style="left:2005px;top:262px;width:1px;height:787px;background:#b4b4b4;"></div>
<div style="left:0px;top:262px;width:2005px;height:1px;background:#ababab;"></div>
</body></html>
